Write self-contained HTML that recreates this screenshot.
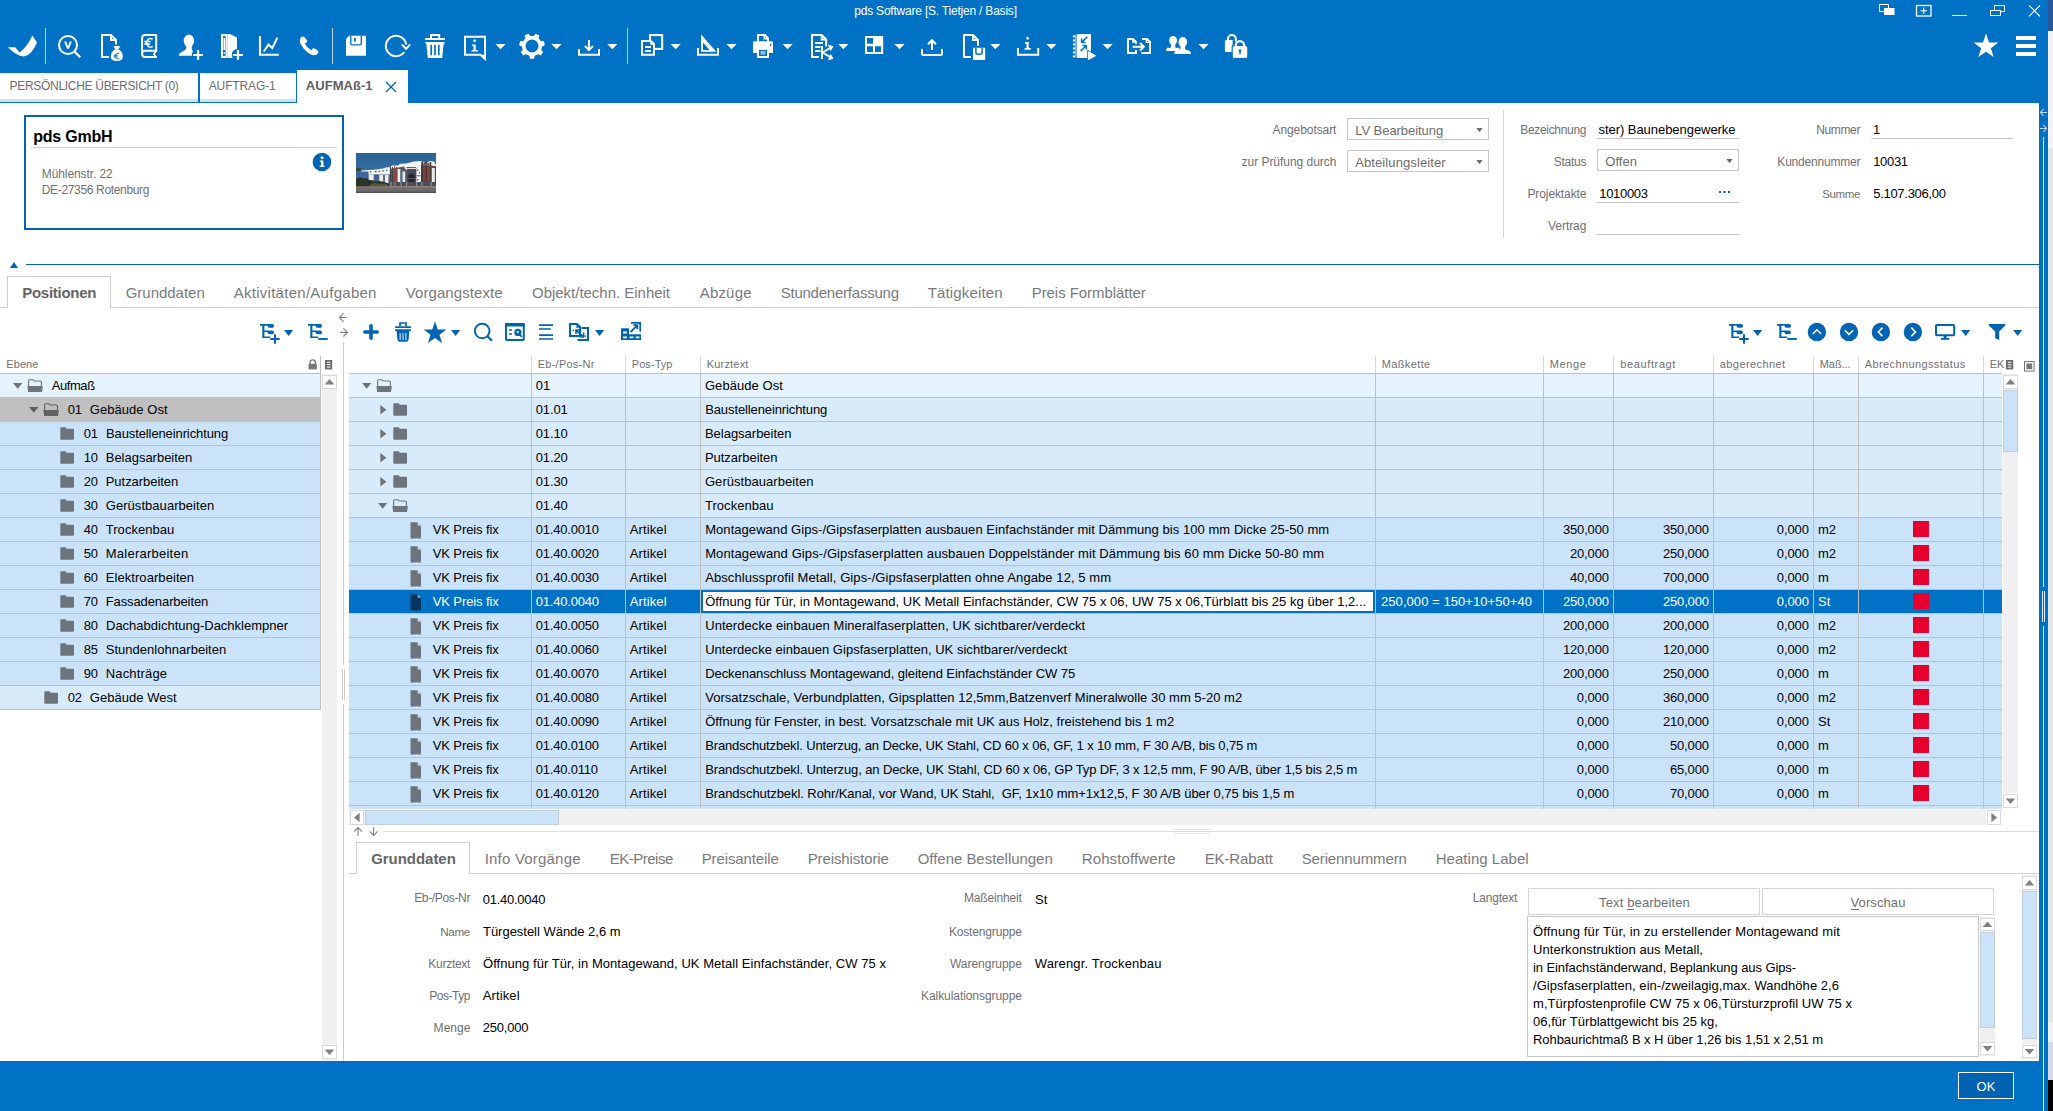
<!DOCTYPE html>
<html><head><meta charset="utf-8"><title>pds Software</title>
<style>
html,body{margin:0;padding:0}
body{width:2053px;height:1111px;position:relative;overflow:hidden;background:#fff;font-family:"Liberation Sans",sans-serif}
div,span.t,svg{position:absolute}
span.t{line-height:20px;white-space:pre}
</style></head><body>
<header aria-label="Titelleiste">
<div style="left:0px;top:0px;width:2048px;height:103px;background:#0072C6;"></div>
<div style="left:2039px;top:0px;width:9px;height:1111px;background:#0072C6;"></div>
<div style="left:0px;top:1061px;width:2048px;height:50px;background:#0072C6;"></div>
<div style="left:2048px;top:0px;width:5px;height:31px;background:#2B579A;"></div>
<div style="left:2048px;top:31px;width:5px;height:117px;background:#F3F3F3;"></div>
<div style="left:2048px;top:148px;width:5px;height:874px;background:#E6E6E6;"></div>
<div style="left:2048px;top:1022px;width:5px;height:20px;background:#F3F2F1;"></div>
<div style="left:2048px;top:1042px;width:5px;height:38px;background:#D4D9E7;"></div>
<div style="left:2048px;top:1080px;width:5px;height:31px;background:#000;"></div>
<div style="left:2043px;top:137px;width:1px;height:450px;background:#DCEBF8;"></div>
<div style="left:2042px;top:591px;width:1px;height:31px;background:#DCEBF8;"></div>
<div style="left:2044px;top:591px;width:1px;height:31px;background:#DCEBF8;"></div>
<div style="left:2043px;top:626px;width:1px;height:485px;background:#DCEBF8;"></div>
<span class="t" style="left:854.25px;top:1px;font-size:12px;color:#fff;letter-spacing:-0.209px;">pds Software [S. Tietjen / Basis]</span>
</header>
<nav aria-label="Dokumente">
<div style="left:0px;top:73px;width:198px;height:30px;background:#fff;"></div>
<div style="left:0px;top:99px;width:198px;height:3px;background:#CFE3F5;"></div>
<div style="left:0px;top:102px;width:198px;height:1px;background:#0072C6;"></div>
<div style="left:200px;top:73px;width:96px;height:30px;background:#fff;"></div>
<div style="left:200px;top:99px;width:96px;height:3px;background:#CFE3F5;"></div>
<div style="left:200px;top:102px;width:96px;height:1px;background:#0072C6;"></div>
<div style="left:297px;top:70px;width:111px;height:33px;background:#fff;"></div>
<span class="t" style="left:9.50px;top:76px;font-size:12px;color:#6E6E6E;letter-spacing:-0.299px;">PERSÖNLICHE ÜBERSICHT (0)</span>
<span class="t" style="left:208.76px;top:76px;font-size:12px;color:#6E6E6E;letter-spacing:-0.129px;">AUFTRAG-1</span>
<span class="t" style="left:305.74px;top:76px;font-size:13px;color:#5F5F5F;font-weight:700;letter-spacing:0.060px;">AUFMAß-1</span>
<svg style="left:385px;top:81px;" width="12" height="12" viewBox="0 0 12 12"><path d="M1 1L11 11M11 1L1 11" stroke="#0064B2" stroke-width="1.3" fill="none"/></svg>
</nav>
<section aria-label="Kopfdaten">
<div style="left:24px;top:115px;width:320px;height:115px;border:2px solid #0064B2;box-sizing:border-box;"></div>
<span class="t" style="left:33.18px;top:127px;font-size:16px;color:#000;font-weight:700;letter-spacing:-0.221px;">pds GmbH</span>
<div style="left:31px;top:147px;width:306px;height:1px;background:#D0D0D0;"></div>
<span class="t" style="left:41.76px;top:164px;font-size:12px;color:#707070;letter-spacing:-0.092px;">Mühlenstr. 22</span>
<span class="t" style="left:41.76px;top:180px;font-size:12px;color:#707070;letter-spacing:-0.337px;">DE-27356 Rotenburg</span>
<svg style="left:312px;top:152px;" width="20" height="20" viewBox="0 0 20 20"><circle cx="10" cy="10" r="9.3" fill="#0064B2"/><rect x="9" y="8.6" width="2.4" height="6" fill="#fff"/><rect x="7.8" y="8.6" width="2.4" height="1.3" fill="#fff"/><rect x="7.6" y="13.6" width="5" height="1.3" fill="#fff"/><circle cx="10.1" cy="5.8" r="1.5" fill="#fff"/></svg>
<svg style="left:356px;top:153px;" width="80" height="40" viewBox="0 0 80 40"><defs><linearGradient id="sky" x1="0" y1="0" x2="0" y2="1"><stop offset="0" stop-color="#2B6293"/><stop offset="1" stop-color="#3D7DB2"/></linearGradient></defs>
<rect width="80" height="40" fill="url(#sky)"/>
<path d="M5 17.5L12 17L20 16.4L27 15.6L30 14.4L34 14L36 12.6L42 12.4L44 10.8L50 10.4L54 9.6L58 8.4L64 8L68 9.2L70 11L72 9L74 8L78 8.4L80 12V34H5Z" fill="#F2F2F1"/>
<path d="M0 15.5Q2 14 4.5 15.5L5.5 18H0Z" fill="#3A4632"/>
<rect x="0" y="18.5" width="12.5" height="9" fill="#3A639C"/><path d="M2 19V27M4.5 19V27M7 19V27M9.5 19V27" stroke="#4F78AE" stroke-width="0.6"/>
<path d="M14 18.2h1.4v1.4H14zM18.6 18h2v1.3h-2zM22.6 17.8h1.6v1.3h-1.6zM26.4 17.3h1.6v1.3h-1.6zM30 16.7h1.4v1.3H30z" fill="#4E5A70"/>
<path d="M12.5 21.5H34V31H12.5Z" fill="#5D6C88"/><path d="M13 21.5h4.6V30H13zM23.4 22h3.6v8h-3.6zM29 22h3.4v9H29z" fill="#EDEDED"/><rect x="18.6" y="21.5" width="3.8" height="9" fill="#3C5F96"/>
<path d="M34 16L42 14.6L48 13.6L50 17H60V14.5H65V12L80 13V33H34Z" fill="#5A5560"/>
<path d="M34.4 13.6V32M36.4 14V32" stroke="#3F3F46" stroke-width="1"/><path d="M38.6 13V30M40.4 14V30" stroke="#8A4A40" stroke-width="1"/><path d="M37.2 15V23H38V15Z" fill="#3D72A8"/>
<rect x="41.6" y="16" width="2.8" height="16" fill="#F2F2F1"/><rect x="46.4" y="18.5" width="2.8" height="13.5" fill="#E6E6E6"/><rect x="44.6" y="17" width="1.6" height="14" fill="#3F6EA6"/>
<path d="M50.4 14.6H60" stroke="#9A3A32" stroke-width="1"/><rect x="51" y="16" width="9" height="16" fill="#444B5C"/><path d="M52.4 22.5Q55.5 18.5 58.8 22.5V31H52.4Z" fill="#25272E"/><path d="M51 25.5H60" stroke="#6B7180" stroke-width="0.6"/>
<rect x="60.4" y="13.5" width="4.6" height="18.5" fill="#F3F3F2"/><path d="M60.6 22.8H64.6" stroke="#8E3A32" stroke-width="0.9"/><path d="M61.2 16.6h1.2v1.5h-1.2zM63 19.2h1v1.3h-1zM61.2 26h1.2v1.5h-1.2z" fill="#50596A"/>
<rect x="65.4" y="9" width="1.6" height="23" fill="#3B3638"/><rect x="67.3" y="10" width="1.8" height="21" fill="#7D4338"/><rect x="69.5" y="8.6" width="1.4" height="23" fill="#3F3A3A"/><rect x="71.3" y="10" width="2" height="21" fill="#824637"/><rect x="73.8" y="9" width="1.5" height="22" fill="#46403F"/>
<rect x="75.8" y="15" width="3" height="17" fill="#ECECEC"/><rect x="79" y="13" width="1" height="19" fill="#7A4238"/>
<path d="M0 26Q3 23 7 25.5Q10 24 13 27Q17 26.5 20 28.5Q24 27.5 27 28.8L33 30.5V35H0Z" fill="#2B3228"/><path d="M14 31.4Q18 29 22 30.8Q27 29.6 32 31.8V35H14Z" fill="#4F5A3C"/>
<rect x="33" y="29" width="47" height="4.4" fill="#4C4E55"/><path d="M35 29V33M39 29V33M45 29V33M50.6 29V33M60.6 29V33M66 29V33M75 29V33" stroke="#8A8C93" stroke-width="1.3"/>
<rect x="0" y="33.2" width="80" height="2" fill="#8A7066"/><rect x="0" y="35" width="80" height="5" fill="#6B6C6E"/><rect x="0" y="38.6" width="80" height="1.4" fill="#505153"/></svg>
<span class="t" style="left:1272.50px;top:120px;font-size:12px;color:#707070;letter-spacing:-0.079px;">Angebotsart</span>
<span class="t" style="left:1241.55px;top:152px;font-size:12px;color:#707070;letter-spacing:-0.032px;">zur Prüfung durch</span>
<div style="left:1347px;top:118px;width:142px;height:22px;background:#fff;border:1px solid #C6C6C6;box-sizing:border-box;"></div>
<span class="t" style="left:1355.24px;top:121px;font-size:13px;color:#6E6E6E;letter-spacing:-0.053px;">LV Bearbeitung</span>
<svg style="left:1476px;top:128px;" width="7" height="4" viewBox="0 0 7 4"><path d="M0.4 0H6.6L3.5 4.2Z" fill="#6A6A6A"/></svg>
<div style="left:1347px;top:150px;width:142px;height:22px;background:#fff;border:1px solid #C6C6C6;box-sizing:border-box;"></div>
<span class="t" style="left:1355.24px;top:153px;font-size:13px;color:#6E6E6E;letter-spacing:0.096px;">Abteilungsleiter</span>
<svg style="left:1476px;top:160px;" width="7" height="4" viewBox="0 0 7 4"><path d="M0.4 0H6.6L3.5 4.2Z" fill="#6A6A6A"/></svg>
<div style="left:1503px;top:110px;width:1px;height:128px;background:#D4D4D4;"></div>
<span class="t" style="left:1520.26px;top:120px;font-size:12px;color:#707070;letter-spacing:-0.322px;">Bezeichnung</span>
<span class="t" style="left:1553.80px;top:152px;font-size:12px;color:#707070;letter-spacing:-0.280px;">Status</span>
<span class="t" style="left:1527.47px;top:184px;font-size:12px;color:#707070;letter-spacing:-0.108px;">Projektakte</span>
<span class="t" style="left:1548.03px;top:216px;font-size:12px;color:#707070;letter-spacing:-0.050px;">Vertrag</span>
<span class="t" style="left:1598.50px;top:120px;font-size:13px;color:#000;letter-spacing:-0.049px;">ster) Baunebengewerke</span>
<div style="left:1597px;top:138px;width:142px;height:1px;background:#C6C6C6;"></div>
<div style="left:1597px;top:149px;width:142px;height:22px;background:#fff;border:1px solid #C6C6C6;box-sizing:border-box;"></div>
<span class="t" style="left:1605.24px;top:152px;font-size:13px;color:#6E6E6E;letter-spacing:0.070px;">Offen</span>
<svg style="left:1726px;top:159px;" width="7" height="4" viewBox="0 0 7 4"><path d="M0.4 0H6.6L3.5 4.2Z" fill="#6A6A6A"/></svg>
<span class="t" style="left:1599.24px;top:184px;font-size:13px;color:#000;letter-spacing:-0.314px;">1010003</span>
<div style="left:1597px;top:202px;width:142px;height:1px;background:#C6C6C6;"></div>
<svg style="left:1719px;top:191px;" width="12" height="3" viewBox="0 0 12 3"><rect x="0" y="0" width="2" height="2" fill="#0064B2"/><rect x="4.5" y="0" width="2" height="2" fill="#0064B2"/><rect x="9" y="0" width="2" height="2" fill="#0064B2"/></svg>
<div style="left:1597px;top:234px;width:142px;height:1px;background:#C6C6C6;"></div>
<span class="t" style="left:1816.22px;top:120px;font-size:12px;color:#707070;letter-spacing:-0.360px;">Nummer</span>
<span class="t" style="left:1777.37px;top:152px;font-size:12px;color:#707070;letter-spacing:-0.211px;">Kundennummer</span>
<span class="t" style="left:1822.22px;top:184px;font-size:11.5px;color:#707070;letter-spacing:-0.356px;">Summe</span>
<span class="t" style="left:1873.00px;top:120px;font-size:13px;color:#000;">1</span>
<div style="left:1871px;top:138px;width:142px;height:1px;background:#C6C6C6;"></div>
<span class="t" style="left:1873.24px;top:152px;font-size:13px;color:#000;letter-spacing:-0.347px;">10031</span>
<span class="t" style="left:1873.24px;top:184px;font-size:13px;color:#000;letter-spacing:-0.291px;">5.107.306,00</span>
<svg style="left:2039px;top:106px;" width="9" height="28" viewBox="0 0 9 28"><path d="M8 6.5H1.5M4.5 3L1.5 6.5L4.5 10M1 22.5H7.5M4.5 19L7.5 22.5L4.5 26" stroke="#B9D9F2" stroke-width="1.1" fill="none"/></svg>
<svg style="left:9px;top:261px;" width="10" height="8" viewBox="0 0 10 8"><path d="M1 7H9L5 1Z" fill="#0064B2"/></svg>
<div style="left:26px;top:264px;width:2013px;height:1px;background:#0064B2;"></div>
</section>
<nav aria-label="Register">
<div style="left:0px;top:307px;width:2039px;height:1px;background:#CFCFCF;"></div>
<div style="left:7px;top:276px;width:104px;height:32px;background:#fff;border:1px solid #CFCFCF;box-sizing:border-box;border-bottom:none;"></div>
<span class="t" style="left:22.20px;top:283px;font-size:15px;color:#666;font-weight:700;letter-spacing:-0.261px;">Positionen</span>
<span class="t" style="left:125.70px;top:283px;font-size:15px;color:#7A7A7A;letter-spacing:-0.017px;">Grunddaten</span>
<span class="t" style="left:233.70px;top:283px;font-size:15px;color:#7A7A7A;letter-spacing:0.273px;">Aktivitäten/Aufgaben</span>
<span class="t" style="left:405.70px;top:283px;font-size:15px;color:#7A7A7A;letter-spacing:0.089px;">Vorgangstexte</span>
<span class="t" style="left:532.00px;top:283px;font-size:15px;color:#7A7A7A;letter-spacing:-0.019px;">Objekt/techn. Einheit</span>
<span class="t" style="left:699.70px;top:283px;font-size:15px;color:#7A7A7A;letter-spacing:0.196px;">Abzüge</span>
<span class="t" style="left:780.70px;top:283px;font-size:15px;color:#7A7A7A;letter-spacing:-0.231px;">Stundenerfassung</span>
<span class="t" style="left:927.70px;top:283px;font-size:15px;color:#7A7A7A;letter-spacing:0.153px;">Tätigkeiten</span>
<span class="t" style="left:1031.70px;top:283px;font-size:15px;color:#7A7A7A;letter-spacing:-0.057px;">Preis Formblätter</span>
</nav>
<aside aria-label="Ebenen">
<span class="t" style="left:6.28px;top:354px;font-size:11px;color:#707070;letter-spacing:0.093px;">Ebene</span>
<svg style="left:308px;top:359px;" width="10" height="11" viewBox="0 0 10 11"><path d="M2 5V3.4Q2 0.8 4.7 0.8Q7.4 0.8 7.4 3.4V5" fill="none" stroke="#777" stroke-width="1.3"/><rect x="0.6" y="4.8" width="8.2" height="5.6" fill="#777"/></svg>
<svg style="left:325px;top:360px;" width="8" height="10" viewBox="0 0 8 10"><rect x="0" y="0" width="7.2" height="9.4" fill="#6A6A6A"/><rect x="1.8" y="1.8" width="3.6" height="1" fill="#fff"/><rect x="1.8" y="4.2" width="3.6" height="1" fill="#fff"/><rect x="1.8" y="6.6" width="3.6" height="1" fill="#fff"/></svg>
<div style="left:320px;top:356px;width:1px;height:354px;background:#BFBFBF;"></div>
<div style="left:0px;top:373px;width:321px;height:1px;background:#BFBFBF;"></div>
<div style="left:0px;top:374px;width:320px;height:23px;background:#E5F3FD;"></div>
<svg style="left:13px;top:383px;" width="10" height="6" viewBox="0 0 10 6"><path d="M0 0H9.4L4.7 5.8Z" fill="#6E747A"/></svg>
<svg style="left:26.5px;top:379px;" width="17" height="14" viewBox="0 0 17 14"><path d="M1.6 7.2V1.9Q1.6 0.8 2.7 0.8H5.6Q6.3 0.8 6.6 1.3L7 2H13.3Q14.4 2 14.4 3.1V7.2" fill="none" stroke="#6C757D" stroke-width="1.1"/><path d="M0.4 6.9H15.8L15.2 12.2Q15.1 13.1 14.1 13.1H2Q1.1 13.1 1 12.2Z" fill="#6C757D"/></svg>
<span class="t" style="left:51.74px;top:376px;font-size:13px;color:#000;letter-spacing:-0.433px;">Aufmaß</span>
<div style="left:0px;top:397px;width:320px;height:25px;background:#C0C0C0;"></div>
<svg style="left:29px;top:407px;" width="10" height="6" viewBox="0 0 10 6"><path d="M0 0H9.4L4.7 5.8Z" fill="#5E5E5E"/></svg>
<svg style="left:42.5px;top:403px;" width="17" height="14" viewBox="0 0 17 14"><path d="M1.6 7.2V1.9Q1.6 0.8 2.7 0.8H5.6Q6.3 0.8 6.6 1.3L7 2H13.3Q14.4 2 14.4 3.1V7.2" fill="none" stroke="#616161" stroke-width="1.1"/><path d="M0.4 6.9H15.8L15.2 12.2Q15.1 13.1 14.1 13.1H2Q1.1 13.1 1 12.2Z" fill="#616161"/></svg>
<span class="t" style="left:67.74px;top:400px;font-size:13px;color:#000;letter-spacing:-0.274px;">01</span>
<span class="t" style="left:89.74px;top:400px;font-size:13px;color:#000;letter-spacing:0.053px;">Gebäude Ost</span>
<div style="left:0px;top:422px;width:320px;height:23px;background:#CAE3F8;"></div>
<div style="left:0px;top:445px;width:320px;height:1px;background:#BFBFBF;"></div>
<svg style="left:60px;top:427px;" width="15" height="13" viewBox="0 0 15 13"><path d="M0.3 1.4Q0.3 0.3 1.4 0.3H5.2Q6 0.3 6.3 1L6.7 1.7H12.8Q14 1.7 14 2.9V11.8Q14 12.7 13 12.7H1.3Q0.3 12.7 0.3 11.8Z" fill="#6C757D"/></svg>
<span class="t" style="left:83.74px;top:424px;font-size:13px;color:#000;letter-spacing:-0.274px;">01</span>
<span class="t" style="left:106.00px;top:424px;font-size:13px;color:#000;letter-spacing:-0.109px;">Baustelleneinrichtung</span>
<div style="left:0px;top:446px;width:320px;height:23px;background:#CAE3F8;"></div>
<div style="left:0px;top:469px;width:320px;height:1px;background:#BFBFBF;"></div>
<svg style="left:60px;top:451px;" width="15" height="13" viewBox="0 0 15 13"><path d="M0.3 1.4Q0.3 0.3 1.4 0.3H5.2Q6 0.3 6.3 1L6.7 1.7H12.8Q14 1.7 14 2.9V11.8Q14 12.7 13 12.7H1.3Q0.3 12.7 0.3 11.8Z" fill="#6C757D"/></svg>
<span class="t" style="left:83.74px;top:448px;font-size:13px;color:#000;letter-spacing:-0.274px;">10</span>
<span class="t" style="left:105.74px;top:448px;font-size:13px;color:#000;letter-spacing:-0.015px;">Belagsarbeiten</span>
<div style="left:0px;top:470px;width:320px;height:23px;background:#CAE3F8;"></div>
<div style="left:0px;top:493px;width:320px;height:1px;background:#BFBFBF;"></div>
<svg style="left:60px;top:475px;" width="15" height="13" viewBox="0 0 15 13"><path d="M0.3 1.4Q0.3 0.3 1.4 0.3H5.2Q6 0.3 6.3 1L6.7 1.7H12.8Q14 1.7 14 2.9V11.8Q14 12.7 13 12.7H1.3Q0.3 12.7 0.3 11.8Z" fill="#6C757D"/></svg>
<span class="t" style="left:83.74px;top:472px;font-size:13px;color:#000;letter-spacing:-0.274px;">20</span>
<span class="t" style="left:105.74px;top:472px;font-size:13px;color:#000;letter-spacing:-0.040px;">Putzarbeiten</span>
<div style="left:0px;top:494px;width:320px;height:23px;background:#CAE3F8;"></div>
<div style="left:0px;top:517px;width:320px;height:1px;background:#BFBFBF;"></div>
<svg style="left:60px;top:499px;" width="15" height="13" viewBox="0 0 15 13"><path d="M0.3 1.4Q0.3 0.3 1.4 0.3H5.2Q6 0.3 6.3 1L6.7 1.7H12.8Q14 1.7 14 2.9V11.8Q14 12.7 13 12.7H1.3Q0.3 12.7 0.3 11.8Z" fill="#6C757D"/></svg>
<span class="t" style="left:83.74px;top:496px;font-size:13px;color:#000;letter-spacing:-0.274px;">30</span>
<span class="t" style="left:105.74px;top:496px;font-size:13px;color:#000;letter-spacing:0.049px;">Gerüstbauarbeiten</span>
<div style="left:0px;top:518px;width:320px;height:23px;background:#CAE3F8;"></div>
<div style="left:0px;top:541px;width:320px;height:1px;background:#BFBFBF;"></div>
<svg style="left:60px;top:523px;" width="15" height="13" viewBox="0 0 15 13"><path d="M0.3 1.4Q0.3 0.3 1.4 0.3H5.2Q6 0.3 6.3 1L6.7 1.7H12.8Q14 1.7 14 2.9V11.8Q14 12.7 13 12.7H1.3Q0.3 12.7 0.3 11.8Z" fill="#6C757D"/></svg>
<span class="t" style="left:83.74px;top:520px;font-size:13px;color:#000;letter-spacing:-0.274px;">40</span>
<span class="t" style="left:105.74px;top:520px;font-size:13px;color:#000;letter-spacing:0.045px;">Trockenbau</span>
<div style="left:0px;top:542px;width:320px;height:23px;background:#CAE3F8;"></div>
<div style="left:0px;top:565px;width:320px;height:1px;background:#BFBFBF;"></div>
<svg style="left:60px;top:547px;" width="15" height="13" viewBox="0 0 15 13"><path d="M0.3 1.4Q0.3 0.3 1.4 0.3H5.2Q6 0.3 6.3 1L6.7 1.7H12.8Q14 1.7 14 2.9V11.8Q14 12.7 13 12.7H1.3Q0.3 12.7 0.3 11.8Z" fill="#6C757D"/></svg>
<span class="t" style="left:83.74px;top:544px;font-size:13px;color:#000;letter-spacing:-0.274px;">50</span>
<span class="t" style="left:105.74px;top:544px;font-size:13px;color:#000;letter-spacing:0.241px;">Malerarbeiten</span>
<div style="left:0px;top:566px;width:320px;height:23px;background:#CAE3F8;"></div>
<div style="left:0px;top:589px;width:320px;height:1px;background:#BFBFBF;"></div>
<svg style="left:60px;top:571px;" width="15" height="13" viewBox="0 0 15 13"><path d="M0.3 1.4Q0.3 0.3 1.4 0.3H5.2Q6 0.3 6.3 1L6.7 1.7H12.8Q14 1.7 14 2.9V11.8Q14 12.7 13 12.7H1.3Q0.3 12.7 0.3 11.8Z" fill="#6C757D"/></svg>
<span class="t" style="left:83.74px;top:568px;font-size:13px;color:#000;letter-spacing:-0.274px;">60</span>
<span class="t" style="left:105.74px;top:568px;font-size:13px;color:#000;letter-spacing:0.065px;">Elektroarbeiten</span>
<div style="left:0px;top:590px;width:320px;height:23px;background:#CAE3F8;"></div>
<div style="left:0px;top:613px;width:320px;height:1px;background:#BFBFBF;"></div>
<svg style="left:60px;top:595px;" width="15" height="13" viewBox="0 0 15 13"><path d="M0.3 1.4Q0.3 0.3 1.4 0.3H5.2Q6 0.3 6.3 1L6.7 1.7H12.8Q14 1.7 14 2.9V11.8Q14 12.7 13 12.7H1.3Q0.3 12.7 0.3 11.8Z" fill="#6C757D"/></svg>
<span class="t" style="left:83.74px;top:592px;font-size:13px;color:#000;letter-spacing:-0.274px;">70</span>
<span class="t" style="left:105.74px;top:592px;font-size:13px;color:#000;letter-spacing:-0.103px;">Fassadenarbeiten</span>
<div style="left:0px;top:614px;width:320px;height:23px;background:#CAE3F8;"></div>
<div style="left:0px;top:637px;width:320px;height:1px;background:#BFBFBF;"></div>
<svg style="left:60px;top:619px;" width="15" height="13" viewBox="0 0 15 13"><path d="M0.3 1.4Q0.3 0.3 1.4 0.3H5.2Q6 0.3 6.3 1L6.7 1.7H12.8Q14 1.7 14 2.9V11.8Q14 12.7 13 12.7H1.3Q0.3 12.7 0.3 11.8Z" fill="#6C757D"/></svg>
<span class="t" style="left:83.74px;top:616px;font-size:13px;color:#000;letter-spacing:-0.274px;">80</span>
<span class="t" style="left:106.00px;top:616px;font-size:13px;color:#000;letter-spacing:-0.003px;">Dachabdichtung-Dachklempner</span>
<div style="left:0px;top:638px;width:320px;height:23px;background:#CAE3F8;"></div>
<div style="left:0px;top:661px;width:320px;height:1px;background:#BFBFBF;"></div>
<svg style="left:60px;top:643px;" width="15" height="13" viewBox="0 0 15 13"><path d="M0.3 1.4Q0.3 0.3 1.4 0.3H5.2Q6 0.3 6.3 1L6.7 1.7H12.8Q14 1.7 14 2.9V11.8Q14 12.7 13 12.7H1.3Q0.3 12.7 0.3 11.8Z" fill="#6C757D"/></svg>
<span class="t" style="left:83.74px;top:640px;font-size:13px;color:#000;letter-spacing:-0.274px;">85</span>
<span class="t" style="left:105.74px;top:640px;font-size:13px;color:#000;letter-spacing:0.028px;">Stundenlohnarbeiten</span>
<div style="left:0px;top:662px;width:320px;height:23px;background:#CAE3F8;"></div>
<div style="left:0px;top:685px;width:320px;height:1px;background:#BFBFBF;"></div>
<svg style="left:60px;top:667px;" width="15" height="13" viewBox="0 0 15 13"><path d="M0.3 1.4Q0.3 0.3 1.4 0.3H5.2Q6 0.3 6.3 1L6.7 1.7H12.8Q14 1.7 14 2.9V11.8Q14 12.7 13 12.7H1.3Q0.3 12.7 0.3 11.8Z" fill="#6C757D"/></svg>
<span class="t" style="left:83.74px;top:664px;font-size:13px;color:#000;letter-spacing:-0.274px;">90</span>
<span class="t" style="left:105.74px;top:664px;font-size:13px;color:#000;letter-spacing:0.171px;">Nachträge</span>
<div style="left:0px;top:686px;width:320px;height:23px;background:#D8EBFB;"></div>
<div style="left:0px;top:709px;width:320px;height:1px;background:#BFBFBF;"></div>
<svg style="left:44px;top:691px;" width="15" height="13" viewBox="0 0 15 13"><path d="M0.3 1.4Q0.3 0.3 1.4 0.3H5.2Q6 0.3 6.3 1L6.7 1.7H12.8Q14 1.7 14 2.9V11.8Q14 12.7 13 12.7H1.3Q0.3 12.7 0.3 11.8Z" fill="#6C757D"/></svg>
<span class="t" style="left:67.74px;top:688px;font-size:13px;color:#000;letter-spacing:-0.274px;">02</span>
<span class="t" style="left:89.74px;top:688px;font-size:13px;color:#000;letter-spacing:0.036px;">Gebäude West</span>
<div style="left:322px;top:374px;width:15px;height:687px;background:#F0F0F0;"></div>
<div style="left:322px;top:375px;width:15px;height:14px;background:#fff;border:1px solid #D9D9D9;box-sizing:border-box;"></div>
<svg style="left:322px;top:375px;" width="15" height="14" viewBox="0 0 15 14"><path d="M2.7 9.6H12.3L7.5 4.0Z" fill="#808080"/></svg>
<div style="left:322px;top:1045px;width:15px;height:14px;background:#fff;border:1px solid #D9D9D9;box-sizing:border-box;"></div>
<svg style="left:322px;top:1045px;" width="15" height="14" viewBox="0 0 15 14"><path d="M2.7 4.4H12.3L7.5 10.0Z" fill="#808080"/></svg>
<div style="left:343px;top:342px;width:1px;height:323px;background:#CDCDCD;"></div>
<div style="left:342px;top:669px;width:1px;height:31px;background:#CDCDCD;"></div>
<div style="left:344px;top:669px;width:1px;height:31px;background:#CDCDCD;"></div>
<div style="left:343px;top:704px;width:1px;height:357px;background:#CDCDCD;"></div>
<svg style="left:338px;top:312px;" width="11" height="26" viewBox="0 0 11 26"><path d="M8.8 5.5H1.6M5.6 1.4L1.5 5.5L5.6 9.6M2.2 20.4H9.4M5.4 16.3L9.5 20.4L5.4 24.5" stroke="#808080" stroke-width="1.15" fill="none"/></svg>
</aside>
<main aria-label="Positionen">
<span class="t" style="left:537.78px;top:354px;font-size:11px;color:#707070;letter-spacing:0.237px;">Eb-/Pos-Nr</span>
<span class="t" style="left:631.78px;top:354px;font-size:11px;color:#707070;letter-spacing:0.061px;">Pos-Typ</span>
<span class="t" style="left:706.78px;top:354px;font-size:11px;color:#707070;letter-spacing:0.178px;">Kurztext</span>
<span class="t" style="left:1381.78px;top:354px;font-size:11px;color:#707070;letter-spacing:0.366px;">Maßkette</span>
<span class="t" style="left:1549.78px;top:354px;font-size:11px;color:#707070;letter-spacing:0.628px;">Menge</span>
<span class="t" style="left:1620.28px;top:354px;font-size:11px;color:#707070;letter-spacing:0.624px;">beauftragt</span>
<span class="t" style="left:1719.78px;top:354px;font-size:11px;color:#707070;letter-spacing:0.420px;">abgerechnet</span>
<span class="t" style="left:1819.78px;top:354px;font-size:11px;color:#707070;letter-spacing:-0.066px;">Maß...</span>
<span class="t" style="left:1864.78px;top:354px;font-size:11px;color:#707070;letter-spacing:0.389px;">Abrechnungsstatus</span>
<span class="t" style="left:1989.78px;top:354px;font-size:11px;color:#707070;letter-spacing:-0.152px;">EK</span>
<div style="left:531px;top:356px;width:1px;height:18px;background:#D6D6D6;"></div>
<div style="left:625px;top:356px;width:1px;height:18px;background:#D6D6D6;"></div>
<div style="left:700px;top:356px;width:1px;height:18px;background:#D6D6D6;"></div>
<div style="left:1375px;top:356px;width:1px;height:18px;background:#D6D6D6;"></div>
<div style="left:1543px;top:356px;width:1px;height:18px;background:#D6D6D6;"></div>
<div style="left:1613px;top:356px;width:1px;height:18px;background:#D6D6D6;"></div>
<div style="left:1713px;top:356px;width:1px;height:18px;background:#D6D6D6;"></div>
<div style="left:1813px;top:356px;width:1px;height:18px;background:#D6D6D6;"></div>
<div style="left:1858px;top:356px;width:1px;height:18px;background:#D6D6D6;"></div>
<div style="left:1983px;top:356px;width:1px;height:18px;background:#D6D6D6;"></div>
<svg style="left:2006px;top:360px;" width="8" height="10" viewBox="0 0 8 10"><rect x="0" y="0" width="7.2" height="9.4" fill="#6A6A6A"/><rect x="1.8" y="1.8" width="3.6" height="1" fill="#fff"/><rect x="1.8" y="4.2" width="3.6" height="1" fill="#fff"/><rect x="1.8" y="6.6" width="3.6" height="1" fill="#fff"/></svg>
<svg style="left:2024px;top:361px;" width="11" height="11" viewBox="0 0 11 11"><rect x="0.5" y="0.5" width="9.6" height="9.6" fill="#fff" stroke="#777" stroke-width="1"/><rect x="2.4" y="2.4" width="5.8" height="5.8" fill="#777"/></svg>
<div style="left:349px;top:373px;width:1653px;height:1px;background:#BFBFBF;"></div>
<div style="left:349px;top:374px;width:1653px;height:23px;background:#E5F3FD;"></div>
<div style="left:349px;top:397px;width:1653px;height:1px;background:#BFBFBF;"></div>
<div style="left:531px;top:374px;width:1px;height:23px;background:#BFBFBF;"></div>
<div style="left:625px;top:374px;width:1px;height:23px;background:#BFBFBF;"></div>
<div style="left:700px;top:374px;width:1px;height:23px;background:#BFBFBF;"></div>
<div style="left:1375px;top:374px;width:1px;height:23px;background:#BFBFBF;"></div>
<div style="left:1543px;top:374px;width:1px;height:23px;background:#BFBFBF;"></div>
<div style="left:1613px;top:374px;width:1px;height:23px;background:#BFBFBF;"></div>
<div style="left:1713px;top:374px;width:1px;height:23px;background:#BFBFBF;"></div>
<div style="left:1813px;top:374px;width:1px;height:23px;background:#BFBFBF;"></div>
<div style="left:1858px;top:374px;width:1px;height:23px;background:#BFBFBF;"></div>
<div style="left:1983px;top:374px;width:1px;height:23px;background:#BFBFBF;"></div>
<svg style="left:362px;top:383px;" width="10" height="6" viewBox="0 0 10 6"><path d="M0 0H9.4L4.7 5.8Z" fill="#6E747A"/></svg>
<svg style="left:375.5px;top:379px;" width="17" height="14" viewBox="0 0 17 14"><path d="M1.6 7.2V1.9Q1.6 0.8 2.7 0.8H5.6Q6.3 0.8 6.6 1.3L7 2H13.3Q14.4 2 14.4 3.1V7.2" fill="none" stroke="#6C757D" stroke-width="1.1"/><path d="M0.4 6.9H15.8L15.2 12.2Q15.1 13.1 14.1 13.1H2Q1.1 13.1 1 12.2Z" fill="#6C757D"/></svg>
<span class="t" style="left:535.74px;top:376px;font-size:13px;color:#000;letter-spacing:0.126px;">01</span>
<span class="t" style="left:704.94px;top:376px;font-size:13px;color:#000;letter-spacing:0.053px;">Gebäude Ost</span>
<div style="left:349px;top:398px;width:1653px;height:23px;background:#D8EBFB;"></div>
<div style="left:349px;top:421px;width:1653px;height:1px;background:#BFBFBF;"></div>
<div style="left:531px;top:398px;width:1px;height:23px;background:#BFBFBF;"></div>
<div style="left:625px;top:398px;width:1px;height:23px;background:#BFBFBF;"></div>
<div style="left:700px;top:398px;width:1px;height:23px;background:#BFBFBF;"></div>
<div style="left:1375px;top:398px;width:1px;height:23px;background:#BFBFBF;"></div>
<div style="left:1543px;top:398px;width:1px;height:23px;background:#BFBFBF;"></div>
<div style="left:1613px;top:398px;width:1px;height:23px;background:#BFBFBF;"></div>
<div style="left:1713px;top:398px;width:1px;height:23px;background:#BFBFBF;"></div>
<div style="left:1813px;top:398px;width:1px;height:23px;background:#BFBFBF;"></div>
<div style="left:1858px;top:398px;width:1px;height:23px;background:#BFBFBF;"></div>
<div style="left:1983px;top:398px;width:1px;height:23px;background:#BFBFBF;"></div>
<svg style="left:380px;top:405px;" width="7" height="10" viewBox="0 0 7 10"><path d="M0.3 0L6.4 4.7L0.3 9.4Z" fill="#6E747A"/></svg>
<svg style="left:393px;top:403px;" width="15" height="13" viewBox="0 0 15 13"><path d="M0.3 1.4Q0.3 0.3 1.4 0.3H5.2Q6 0.3 6.3 1L6.7 1.7H12.8Q14 1.7 14 2.9V11.8Q14 12.7 13 12.7H1.3Q0.3 12.7 0.3 11.8Z" fill="#6C757D"/></svg>
<span class="t" style="left:535.74px;top:400px;font-size:13px;color:#000;letter-spacing:-0.104px;">01.01</span>
<span class="t" style="left:705.20px;top:400px;font-size:13px;color:#000;letter-spacing:-0.109px;">Baustelleneinrichtung</span>
<div style="left:349px;top:422px;width:1653px;height:23px;background:#D8EBFB;"></div>
<div style="left:349px;top:445px;width:1653px;height:1px;background:#BFBFBF;"></div>
<div style="left:531px;top:422px;width:1px;height:23px;background:#BFBFBF;"></div>
<div style="left:625px;top:422px;width:1px;height:23px;background:#BFBFBF;"></div>
<div style="left:700px;top:422px;width:1px;height:23px;background:#BFBFBF;"></div>
<div style="left:1375px;top:422px;width:1px;height:23px;background:#BFBFBF;"></div>
<div style="left:1543px;top:422px;width:1px;height:23px;background:#BFBFBF;"></div>
<div style="left:1613px;top:422px;width:1px;height:23px;background:#BFBFBF;"></div>
<div style="left:1713px;top:422px;width:1px;height:23px;background:#BFBFBF;"></div>
<div style="left:1813px;top:422px;width:1px;height:23px;background:#BFBFBF;"></div>
<div style="left:1858px;top:422px;width:1px;height:23px;background:#BFBFBF;"></div>
<div style="left:1983px;top:422px;width:1px;height:23px;background:#BFBFBF;"></div>
<svg style="left:380px;top:429px;" width="7" height="10" viewBox="0 0 7 10"><path d="M0.3 0L6.4 4.7L0.3 9.4Z" fill="#6E747A"/></svg>
<svg style="left:393px;top:427px;" width="15" height="13" viewBox="0 0 15 13"><path d="M0.3 1.4Q0.3 0.3 1.4 0.3H5.2Q6 0.3 6.3 1L6.7 1.7H12.8Q14 1.7 14 2.9V11.8Q14 12.7 13 12.7H1.3Q0.3 12.7 0.3 11.8Z" fill="#6C757D"/></svg>
<span class="t" style="left:535.74px;top:424px;font-size:13px;color:#000;letter-spacing:-0.104px;">01.10</span>
<span class="t" style="left:704.94px;top:424px;font-size:13px;color:#000;letter-spacing:-0.015px;">Belagsarbeiten</span>
<div style="left:349px;top:446px;width:1653px;height:23px;background:#D8EBFB;"></div>
<div style="left:349px;top:469px;width:1653px;height:1px;background:#BFBFBF;"></div>
<div style="left:531px;top:446px;width:1px;height:23px;background:#BFBFBF;"></div>
<div style="left:625px;top:446px;width:1px;height:23px;background:#BFBFBF;"></div>
<div style="left:700px;top:446px;width:1px;height:23px;background:#BFBFBF;"></div>
<div style="left:1375px;top:446px;width:1px;height:23px;background:#BFBFBF;"></div>
<div style="left:1543px;top:446px;width:1px;height:23px;background:#BFBFBF;"></div>
<div style="left:1613px;top:446px;width:1px;height:23px;background:#BFBFBF;"></div>
<div style="left:1713px;top:446px;width:1px;height:23px;background:#BFBFBF;"></div>
<div style="left:1813px;top:446px;width:1px;height:23px;background:#BFBFBF;"></div>
<div style="left:1858px;top:446px;width:1px;height:23px;background:#BFBFBF;"></div>
<div style="left:1983px;top:446px;width:1px;height:23px;background:#BFBFBF;"></div>
<svg style="left:380px;top:453px;" width="7" height="10" viewBox="0 0 7 10"><path d="M0.3 0L6.4 4.7L0.3 9.4Z" fill="#6E747A"/></svg>
<svg style="left:393px;top:451px;" width="15" height="13" viewBox="0 0 15 13"><path d="M0.3 1.4Q0.3 0.3 1.4 0.3H5.2Q6 0.3 6.3 1L6.7 1.7H12.8Q14 1.7 14 2.9V11.8Q14 12.7 13 12.7H1.3Q0.3 12.7 0.3 11.8Z" fill="#6C757D"/></svg>
<span class="t" style="left:535.74px;top:448px;font-size:13px;color:#000;letter-spacing:-0.104px;">01.20</span>
<span class="t" style="left:704.94px;top:448px;font-size:13px;color:#000;letter-spacing:-0.040px;">Putzarbeiten</span>
<div style="left:349px;top:470px;width:1653px;height:23px;background:#D8EBFB;"></div>
<div style="left:349px;top:493px;width:1653px;height:1px;background:#BFBFBF;"></div>
<div style="left:531px;top:470px;width:1px;height:23px;background:#BFBFBF;"></div>
<div style="left:625px;top:470px;width:1px;height:23px;background:#BFBFBF;"></div>
<div style="left:700px;top:470px;width:1px;height:23px;background:#BFBFBF;"></div>
<div style="left:1375px;top:470px;width:1px;height:23px;background:#BFBFBF;"></div>
<div style="left:1543px;top:470px;width:1px;height:23px;background:#BFBFBF;"></div>
<div style="left:1613px;top:470px;width:1px;height:23px;background:#BFBFBF;"></div>
<div style="left:1713px;top:470px;width:1px;height:23px;background:#BFBFBF;"></div>
<div style="left:1813px;top:470px;width:1px;height:23px;background:#BFBFBF;"></div>
<div style="left:1858px;top:470px;width:1px;height:23px;background:#BFBFBF;"></div>
<div style="left:1983px;top:470px;width:1px;height:23px;background:#BFBFBF;"></div>
<svg style="left:380px;top:477px;" width="7" height="10" viewBox="0 0 7 10"><path d="M0.3 0L6.4 4.7L0.3 9.4Z" fill="#6E747A"/></svg>
<svg style="left:393px;top:475px;" width="15" height="13" viewBox="0 0 15 13"><path d="M0.3 1.4Q0.3 0.3 1.4 0.3H5.2Q6 0.3 6.3 1L6.7 1.7H12.8Q14 1.7 14 2.9V11.8Q14 12.7 13 12.7H1.3Q0.3 12.7 0.3 11.8Z" fill="#6C757D"/></svg>
<span class="t" style="left:535.74px;top:472px;font-size:13px;color:#000;letter-spacing:-0.104px;">01.30</span>
<span class="t" style="left:704.94px;top:472px;font-size:13px;color:#000;letter-spacing:0.049px;">Gerüstbauarbeiten</span>
<div style="left:349px;top:494px;width:1653px;height:23px;background:#D8EBFB;"></div>
<div style="left:349px;top:517px;width:1653px;height:1px;background:#BFBFBF;"></div>
<div style="left:531px;top:494px;width:1px;height:23px;background:#BFBFBF;"></div>
<div style="left:625px;top:494px;width:1px;height:23px;background:#BFBFBF;"></div>
<div style="left:700px;top:494px;width:1px;height:23px;background:#BFBFBF;"></div>
<div style="left:1375px;top:494px;width:1px;height:23px;background:#BFBFBF;"></div>
<div style="left:1543px;top:494px;width:1px;height:23px;background:#BFBFBF;"></div>
<div style="left:1613px;top:494px;width:1px;height:23px;background:#BFBFBF;"></div>
<div style="left:1713px;top:494px;width:1px;height:23px;background:#BFBFBF;"></div>
<div style="left:1813px;top:494px;width:1px;height:23px;background:#BFBFBF;"></div>
<div style="left:1858px;top:494px;width:1px;height:23px;background:#BFBFBF;"></div>
<div style="left:1983px;top:494px;width:1px;height:23px;background:#BFBFBF;"></div>
<svg style="left:378px;top:503px;" width="10" height="6" viewBox="0 0 10 6"><path d="M0 0H9.4L4.7 5.8Z" fill="#6E747A"/></svg>
<svg style="left:391.5px;top:499px;" width="17" height="14" viewBox="0 0 17 14"><path d="M1.6 7.2V1.9Q1.6 0.8 2.7 0.8H5.6Q6.3 0.8 6.6 1.3L7 2H13.3Q14.4 2 14.4 3.1V7.2" fill="none" stroke="#6C757D" stroke-width="1.1"/><path d="M0.4 6.9H15.8L15.2 12.2Q15.1 13.1 14.1 13.1H2Q1.1 13.1 1 12.2Z" fill="#6C757D"/></svg>
<span class="t" style="left:535.74px;top:496px;font-size:13px;color:#000;letter-spacing:-0.104px;">01.40</span>
<span class="t" style="left:704.94px;top:496px;font-size:13px;color:#000;letter-spacing:0.045px;">Trockenbau</span>
<div style="left:349px;top:518px;width:1653px;height:23px;background:#CAE3F8;"></div>
<div style="left:349px;top:541px;width:1653px;height:1px;background:#BFBFBF;"></div>
<div style="left:531px;top:518px;width:1px;height:23px;background:#BFBFBF;"></div>
<div style="left:625px;top:518px;width:1px;height:23px;background:#BFBFBF;"></div>
<div style="left:700px;top:518px;width:1px;height:23px;background:#BFBFBF;"></div>
<div style="left:1375px;top:518px;width:1px;height:23px;background:#BFBFBF;"></div>
<div style="left:1543px;top:518px;width:1px;height:23px;background:#BFBFBF;"></div>
<div style="left:1613px;top:518px;width:1px;height:23px;background:#BFBFBF;"></div>
<div style="left:1713px;top:518px;width:1px;height:23px;background:#BFBFBF;"></div>
<div style="left:1813px;top:518px;width:1px;height:23px;background:#BFBFBF;"></div>
<div style="left:1858px;top:518px;width:1px;height:23px;background:#BFBFBF;"></div>
<div style="left:1983px;top:518px;width:1px;height:23px;background:#BFBFBF;"></div>
<svg style="left:410px;top:522px;" width="12" height="17" viewBox="0 0 12 17"><path d="M0.5 0.3H7.3L11 4V16.4H0.5Z" fill="#6C757D"/><path d="M7.6 0.3V3.7H11Z" fill="#fff" opacity="0.55"/></svg>
<span class="t" style="left:432.74px;top:520px;font-size:13px;color:#000;letter-spacing:-0.106px;">VK Preis fix</span>
<span class="t" style="left:629.74px;top:520px;font-size:13px;color:#000;letter-spacing:0.113px;">Artikel</span>
<span class="t" style="left:535.74px;top:520px;font-size:13px;color:#000;letter-spacing:-0.205px;">01.40.0010</span>
<span class="t" style="left:705.20px;top:520px;font-size:13px;color:#000;letter-spacing:0.050px;">Montagewand Gips-/Gipsfaserplatten ausbauen Einfachständer mit Dämmung bis 100 mm Dicke 25-50 mm</span>
<span class="t" style="left:1562.98px;top:520px;font-size:13px;color:#000;letter-spacing:-0.168px;">350,000</span>
<span class="t" style="left:1662.98px;top:520px;font-size:13px;color:#000;letter-spacing:-0.168px;">350,000</span>
<span class="t" style="left:1776.84px;top:520px;font-size:13px;color:#000;letter-spacing:-0.104px;">0,000</span>
<span class="t" style="left:1818.00px;top:520px;font-size:13px;color:#000;">m2</span>
<div style="left:1913px;top:521px;width:16px;height:16px;background:#E6002D;"></div>
<div style="left:349px;top:542px;width:1653px;height:23px;background:#CAE3F8;"></div>
<div style="left:349px;top:565px;width:1653px;height:1px;background:#BFBFBF;"></div>
<div style="left:531px;top:542px;width:1px;height:23px;background:#BFBFBF;"></div>
<div style="left:625px;top:542px;width:1px;height:23px;background:#BFBFBF;"></div>
<div style="left:700px;top:542px;width:1px;height:23px;background:#BFBFBF;"></div>
<div style="left:1375px;top:542px;width:1px;height:23px;background:#BFBFBF;"></div>
<div style="left:1543px;top:542px;width:1px;height:23px;background:#BFBFBF;"></div>
<div style="left:1613px;top:542px;width:1px;height:23px;background:#BFBFBF;"></div>
<div style="left:1713px;top:542px;width:1px;height:23px;background:#BFBFBF;"></div>
<div style="left:1813px;top:542px;width:1px;height:23px;background:#BFBFBF;"></div>
<div style="left:1858px;top:542px;width:1px;height:23px;background:#BFBFBF;"></div>
<div style="left:1983px;top:542px;width:1px;height:23px;background:#BFBFBF;"></div>
<svg style="left:410px;top:546px;" width="12" height="17" viewBox="0 0 12 17"><path d="M0.5 0.3H7.3L11 4V16.4H0.5Z" fill="#6C757D"/><path d="M7.6 0.3V3.7H11Z" fill="#fff" opacity="0.55"/></svg>
<span class="t" style="left:432.74px;top:544px;font-size:13px;color:#000;letter-spacing:-0.106px;">VK Preis fix</span>
<span class="t" style="left:629.74px;top:544px;font-size:13px;color:#000;letter-spacing:0.113px;">Artikel</span>
<span class="t" style="left:535.74px;top:544px;font-size:13px;color:#000;letter-spacing:-0.205px;">01.40.0020</span>
<span class="t" style="left:705.20px;top:544px;font-size:13px;color:#000;letter-spacing:0.098px;">Montagewand Gips-/Gipsfaserplatten ausbauen Doppelständer mit Dämmung bis 60 mm Dicke 50-80 mm</span>
<span class="t" style="left:1569.90px;top:544px;font-size:13px;color:#000;letter-spacing:-0.141px;">20,000</span>
<span class="t" style="left:1662.98px;top:544px;font-size:13px;color:#000;letter-spacing:-0.168px;">250,000</span>
<span class="t" style="left:1776.84px;top:544px;font-size:13px;color:#000;letter-spacing:-0.104px;">0,000</span>
<span class="t" style="left:1818.00px;top:544px;font-size:13px;color:#000;">m2</span>
<div style="left:1913px;top:545px;width:16px;height:16px;background:#E6002D;"></div>
<div style="left:349px;top:566px;width:1653px;height:23px;background:#CAE3F8;"></div>
<div style="left:349px;top:589px;width:1653px;height:1px;background:#BFBFBF;"></div>
<div style="left:531px;top:566px;width:1px;height:23px;background:#BFBFBF;"></div>
<div style="left:625px;top:566px;width:1px;height:23px;background:#BFBFBF;"></div>
<div style="left:700px;top:566px;width:1px;height:23px;background:#BFBFBF;"></div>
<div style="left:1375px;top:566px;width:1px;height:23px;background:#BFBFBF;"></div>
<div style="left:1543px;top:566px;width:1px;height:23px;background:#BFBFBF;"></div>
<div style="left:1613px;top:566px;width:1px;height:23px;background:#BFBFBF;"></div>
<div style="left:1713px;top:566px;width:1px;height:23px;background:#BFBFBF;"></div>
<div style="left:1813px;top:566px;width:1px;height:23px;background:#BFBFBF;"></div>
<div style="left:1858px;top:566px;width:1px;height:23px;background:#BFBFBF;"></div>
<div style="left:1983px;top:566px;width:1px;height:23px;background:#BFBFBF;"></div>
<svg style="left:410px;top:570px;" width="12" height="17" viewBox="0 0 12 17"><path d="M0.5 0.3H7.3L11 4V16.4H0.5Z" fill="#6C757D"/><path d="M7.6 0.3V3.7H11Z" fill="#fff" opacity="0.55"/></svg>
<span class="t" style="left:432.74px;top:568px;font-size:13px;color:#000;letter-spacing:-0.106px;">VK Preis fix</span>
<span class="t" style="left:629.74px;top:568px;font-size:13px;color:#000;letter-spacing:0.113px;">Artikel</span>
<span class="t" style="left:535.74px;top:568px;font-size:13px;color:#000;letter-spacing:-0.205px;">01.40.0030</span>
<span class="t" style="left:705.20px;top:568px;font-size:13px;color:#000;letter-spacing:0.085px;">Abschlussprofil Metall, Gips-/Gipsfaserplatten ohne Angabe 12, 5 mm</span>
<span class="t" style="left:1569.90px;top:568px;font-size:13px;color:#000;letter-spacing:-0.141px;">40,000</span>
<span class="t" style="left:1662.98px;top:568px;font-size:13px;color:#000;letter-spacing:-0.168px;">700,000</span>
<span class="t" style="left:1776.84px;top:568px;font-size:13px;color:#000;letter-spacing:-0.104px;">0,000</span>
<span class="t" style="left:1818.00px;top:568px;font-size:13px;color:#000;">m</span>
<div style="left:1913px;top:569px;width:16px;height:16px;background:#E6002D;"></div>
<div style="left:349px;top:590px;width:1653px;height:23px;background:#0072C6;"></div>
<div style="left:349px;top:613px;width:1653px;height:1px;background:#BFBFBF;"></div>
<div style="left:531px;top:590px;width:1px;height:23px;background:#BFBFBF;"></div>
<div style="left:625px;top:590px;width:1px;height:23px;background:#BFBFBF;"></div>
<div style="left:700px;top:590px;width:1px;height:23px;background:#BFBFBF;"></div>
<div style="left:1375px;top:590px;width:1px;height:23px;background:#BFBFBF;"></div>
<div style="left:1543px;top:590px;width:1px;height:23px;background:#BFBFBF;"></div>
<div style="left:1613px;top:590px;width:1px;height:23px;background:#BFBFBF;"></div>
<div style="left:1713px;top:590px;width:1px;height:23px;background:#BFBFBF;"></div>
<div style="left:1813px;top:590px;width:1px;height:23px;background:#BFBFBF;"></div>
<div style="left:1858px;top:590px;width:1px;height:23px;background:#BFBFBF;"></div>
<div style="left:1983px;top:590px;width:1px;height:23px;background:#BFBFBF;"></div>
<svg style="left:410px;top:594px;" width="12" height="17" viewBox="0 0 12 17"><path d="M0.5 0.3H7.3L11 4V16.4H0.5Z" fill="#06365F"/><path d="M7.6 0.3V3.7H11Z" fill="#fff" opacity="0.55"/></svg>
<span class="t" style="left:432.74px;top:592px;font-size:13px;color:#fff;letter-spacing:-0.106px;">VK Preis fix</span>
<span class="t" style="left:629.74px;top:592px;font-size:13px;color:#fff;letter-spacing:0.113px;">Artikel</span>
<span class="t" style="left:535.74px;top:592px;font-size:13px;color:#fff;letter-spacing:-0.205px;">01.40.0040</span>
<div style="left:703px;top:592px;width:670px;height:19px;background:#fff;"></div>
<span class="t" style="left:705.20px;top:592px;font-size:13px;color:#000;letter-spacing:0.022px;">Öffnung für Tür, in Montagewand, UK Metall Einfachständer, CW 75 x 06, UW 75 x 06,Türblatt bis 25 kg über 1,2...</span>
<span class="t" style="left:1381.00px;top:592px;font-size:13px;color:#fff;letter-spacing:0.062px;">250,000 = 150+10+50+40</span>
<span class="t" style="left:1562.98px;top:592px;font-size:13px;color:#fff;letter-spacing:-0.168px;">250,000</span>
<span class="t" style="left:1662.98px;top:592px;font-size:13px;color:#fff;letter-spacing:-0.168px;">250,000</span>
<span class="t" style="left:1776.84px;top:592px;font-size:13px;color:#fff;letter-spacing:-0.104px;">0,000</span>
<span class="t" style="left:1818.00px;top:592px;font-size:13px;color:#fff;">St</span>
<div style="left:1913px;top:593px;width:16px;height:16px;background:#E6002D;"></div>
<div style="left:349px;top:614px;width:1653px;height:23px;background:#CAE3F8;"></div>
<div style="left:349px;top:637px;width:1653px;height:1px;background:#BFBFBF;"></div>
<div style="left:531px;top:614px;width:1px;height:23px;background:#BFBFBF;"></div>
<div style="left:625px;top:614px;width:1px;height:23px;background:#BFBFBF;"></div>
<div style="left:700px;top:614px;width:1px;height:23px;background:#BFBFBF;"></div>
<div style="left:1375px;top:614px;width:1px;height:23px;background:#BFBFBF;"></div>
<div style="left:1543px;top:614px;width:1px;height:23px;background:#BFBFBF;"></div>
<div style="left:1613px;top:614px;width:1px;height:23px;background:#BFBFBF;"></div>
<div style="left:1713px;top:614px;width:1px;height:23px;background:#BFBFBF;"></div>
<div style="left:1813px;top:614px;width:1px;height:23px;background:#BFBFBF;"></div>
<div style="left:1858px;top:614px;width:1px;height:23px;background:#BFBFBF;"></div>
<div style="left:1983px;top:614px;width:1px;height:23px;background:#BFBFBF;"></div>
<svg style="left:410px;top:618px;" width="12" height="17" viewBox="0 0 12 17"><path d="M0.5 0.3H7.3L11 4V16.4H0.5Z" fill="#6C757D"/><path d="M7.6 0.3V3.7H11Z" fill="#fff" opacity="0.55"/></svg>
<span class="t" style="left:432.74px;top:616px;font-size:13px;color:#000;letter-spacing:-0.106px;">VK Preis fix</span>
<span class="t" style="left:629.74px;top:616px;font-size:13px;color:#000;letter-spacing:0.113px;">Artikel</span>
<span class="t" style="left:535.74px;top:616px;font-size:13px;color:#000;letter-spacing:-0.205px;">01.40.0050</span>
<span class="t" style="left:705.20px;top:616px;font-size:13px;color:#000;letter-spacing:0.056px;">Unterdecke einbauen Mineralfaserplatten, UK sichtbarer/verdeckt</span>
<span class="t" style="left:1562.98px;top:616px;font-size:13px;color:#000;letter-spacing:-0.168px;">200,000</span>
<span class="t" style="left:1662.98px;top:616px;font-size:13px;color:#000;letter-spacing:-0.168px;">200,000</span>
<span class="t" style="left:1776.84px;top:616px;font-size:13px;color:#000;letter-spacing:-0.104px;">0,000</span>
<span class="t" style="left:1818.00px;top:616px;font-size:13px;color:#000;">m2</span>
<div style="left:1913px;top:617px;width:16px;height:16px;background:#E6002D;"></div>
<div style="left:349px;top:638px;width:1653px;height:23px;background:#CAE3F8;"></div>
<div style="left:349px;top:661px;width:1653px;height:1px;background:#BFBFBF;"></div>
<div style="left:531px;top:638px;width:1px;height:23px;background:#BFBFBF;"></div>
<div style="left:625px;top:638px;width:1px;height:23px;background:#BFBFBF;"></div>
<div style="left:700px;top:638px;width:1px;height:23px;background:#BFBFBF;"></div>
<div style="left:1375px;top:638px;width:1px;height:23px;background:#BFBFBF;"></div>
<div style="left:1543px;top:638px;width:1px;height:23px;background:#BFBFBF;"></div>
<div style="left:1613px;top:638px;width:1px;height:23px;background:#BFBFBF;"></div>
<div style="left:1713px;top:638px;width:1px;height:23px;background:#BFBFBF;"></div>
<div style="left:1813px;top:638px;width:1px;height:23px;background:#BFBFBF;"></div>
<div style="left:1858px;top:638px;width:1px;height:23px;background:#BFBFBF;"></div>
<div style="left:1983px;top:638px;width:1px;height:23px;background:#BFBFBF;"></div>
<svg style="left:410px;top:642px;" width="12" height="17" viewBox="0 0 12 17"><path d="M0.5 0.3H7.3L11 4V16.4H0.5Z" fill="#6C757D"/><path d="M7.6 0.3V3.7H11Z" fill="#fff" opacity="0.55"/></svg>
<span class="t" style="left:432.74px;top:640px;font-size:13px;color:#000;letter-spacing:-0.106px;">VK Preis fix</span>
<span class="t" style="left:629.74px;top:640px;font-size:13px;color:#000;letter-spacing:0.113px;">Artikel</span>
<span class="t" style="left:535.74px;top:640px;font-size:13px;color:#000;letter-spacing:-0.205px;">01.40.0060</span>
<span class="t" style="left:705.20px;top:640px;font-size:13px;color:#000;letter-spacing:0.024px;">Unterdecke einbauen Gipsfaserplatten, UK sichtbarer/verdeckt</span>
<span class="t" style="left:1562.98px;top:640px;font-size:13px;color:#000;letter-spacing:-0.168px;">120,000</span>
<span class="t" style="left:1662.98px;top:640px;font-size:13px;color:#000;letter-spacing:-0.168px;">120,000</span>
<span class="t" style="left:1776.84px;top:640px;font-size:13px;color:#000;letter-spacing:-0.104px;">0,000</span>
<span class="t" style="left:1818.00px;top:640px;font-size:13px;color:#000;">m2</span>
<div style="left:1913px;top:641px;width:16px;height:16px;background:#E6002D;"></div>
<div style="left:349px;top:662px;width:1653px;height:23px;background:#CAE3F8;"></div>
<div style="left:349px;top:685px;width:1653px;height:1px;background:#BFBFBF;"></div>
<div style="left:531px;top:662px;width:1px;height:23px;background:#BFBFBF;"></div>
<div style="left:625px;top:662px;width:1px;height:23px;background:#BFBFBF;"></div>
<div style="left:700px;top:662px;width:1px;height:23px;background:#BFBFBF;"></div>
<div style="left:1375px;top:662px;width:1px;height:23px;background:#BFBFBF;"></div>
<div style="left:1543px;top:662px;width:1px;height:23px;background:#BFBFBF;"></div>
<div style="left:1613px;top:662px;width:1px;height:23px;background:#BFBFBF;"></div>
<div style="left:1713px;top:662px;width:1px;height:23px;background:#BFBFBF;"></div>
<div style="left:1813px;top:662px;width:1px;height:23px;background:#BFBFBF;"></div>
<div style="left:1858px;top:662px;width:1px;height:23px;background:#BFBFBF;"></div>
<div style="left:1983px;top:662px;width:1px;height:23px;background:#BFBFBF;"></div>
<svg style="left:410px;top:666px;" width="12" height="17" viewBox="0 0 12 17"><path d="M0.5 0.3H7.3L11 4V16.4H0.5Z" fill="#6C757D"/><path d="M7.6 0.3V3.7H11Z" fill="#fff" opacity="0.55"/></svg>
<span class="t" style="left:432.74px;top:664px;font-size:13px;color:#000;letter-spacing:-0.106px;">VK Preis fix</span>
<span class="t" style="left:629.74px;top:664px;font-size:13px;color:#000;letter-spacing:0.113px;">Artikel</span>
<span class="t" style="left:535.74px;top:664px;font-size:13px;color:#000;letter-spacing:-0.205px;">01.40.0070</span>
<span class="t" style="left:705.20px;top:664px;font-size:13px;color:#000;letter-spacing:-0.062px;">Deckenanschluss Montagewand, gleitend Einfachständer CW 75</span>
<span class="t" style="left:1562.98px;top:664px;font-size:13px;color:#000;letter-spacing:-0.168px;">200,000</span>
<span class="t" style="left:1662.98px;top:664px;font-size:13px;color:#000;letter-spacing:-0.168px;">250,000</span>
<span class="t" style="left:1776.84px;top:664px;font-size:13px;color:#000;letter-spacing:-0.104px;">0,000</span>
<span class="t" style="left:1818.00px;top:664px;font-size:13px;color:#000;">m</span>
<div style="left:1913px;top:665px;width:16px;height:16px;background:#E6002D;"></div>
<div style="left:349px;top:686px;width:1653px;height:23px;background:#CAE3F8;"></div>
<div style="left:349px;top:709px;width:1653px;height:1px;background:#BFBFBF;"></div>
<div style="left:531px;top:686px;width:1px;height:23px;background:#BFBFBF;"></div>
<div style="left:625px;top:686px;width:1px;height:23px;background:#BFBFBF;"></div>
<div style="left:700px;top:686px;width:1px;height:23px;background:#BFBFBF;"></div>
<div style="left:1375px;top:686px;width:1px;height:23px;background:#BFBFBF;"></div>
<div style="left:1543px;top:686px;width:1px;height:23px;background:#BFBFBF;"></div>
<div style="left:1613px;top:686px;width:1px;height:23px;background:#BFBFBF;"></div>
<div style="left:1713px;top:686px;width:1px;height:23px;background:#BFBFBF;"></div>
<div style="left:1813px;top:686px;width:1px;height:23px;background:#BFBFBF;"></div>
<div style="left:1858px;top:686px;width:1px;height:23px;background:#BFBFBF;"></div>
<div style="left:1983px;top:686px;width:1px;height:23px;background:#BFBFBF;"></div>
<svg style="left:410px;top:690px;" width="12" height="17" viewBox="0 0 12 17"><path d="M0.5 0.3H7.3L11 4V16.4H0.5Z" fill="#6C757D"/><path d="M7.6 0.3V3.7H11Z" fill="#fff" opacity="0.55"/></svg>
<span class="t" style="left:432.74px;top:688px;font-size:13px;color:#000;letter-spacing:-0.106px;">VK Preis fix</span>
<span class="t" style="left:629.74px;top:688px;font-size:13px;color:#000;letter-spacing:0.113px;">Artikel</span>
<span class="t" style="left:535.74px;top:688px;font-size:13px;color:#000;letter-spacing:-0.205px;">01.40.0080</span>
<span class="t" style="left:705.20px;top:688px;font-size:13px;color:#000;letter-spacing:0.018px;">Vorsatzschale, Verbundplatten, Gipsplatten 12,5mm,Batzenverf Mineralwolle 30 mm 5-20 m2</span>
<span class="t" style="left:1576.84px;top:688px;font-size:13px;color:#000;letter-spacing:-0.104px;">0,000</span>
<span class="t" style="left:1662.98px;top:688px;font-size:13px;color:#000;letter-spacing:-0.168px;">360,000</span>
<span class="t" style="left:1776.84px;top:688px;font-size:13px;color:#000;letter-spacing:-0.104px;">0,000</span>
<span class="t" style="left:1818.00px;top:688px;font-size:13px;color:#000;">m2</span>
<div style="left:1913px;top:689px;width:16px;height:16px;background:#E6002D;"></div>
<div style="left:349px;top:710px;width:1653px;height:23px;background:#CAE3F8;"></div>
<div style="left:349px;top:733px;width:1653px;height:1px;background:#BFBFBF;"></div>
<div style="left:531px;top:710px;width:1px;height:23px;background:#BFBFBF;"></div>
<div style="left:625px;top:710px;width:1px;height:23px;background:#BFBFBF;"></div>
<div style="left:700px;top:710px;width:1px;height:23px;background:#BFBFBF;"></div>
<div style="left:1375px;top:710px;width:1px;height:23px;background:#BFBFBF;"></div>
<div style="left:1543px;top:710px;width:1px;height:23px;background:#BFBFBF;"></div>
<div style="left:1613px;top:710px;width:1px;height:23px;background:#BFBFBF;"></div>
<div style="left:1713px;top:710px;width:1px;height:23px;background:#BFBFBF;"></div>
<div style="left:1813px;top:710px;width:1px;height:23px;background:#BFBFBF;"></div>
<div style="left:1858px;top:710px;width:1px;height:23px;background:#BFBFBF;"></div>
<div style="left:1983px;top:710px;width:1px;height:23px;background:#BFBFBF;"></div>
<svg style="left:410px;top:714px;" width="12" height="17" viewBox="0 0 12 17"><path d="M0.5 0.3H7.3L11 4V16.4H0.5Z" fill="#6C757D"/><path d="M7.6 0.3V3.7H11Z" fill="#fff" opacity="0.55"/></svg>
<span class="t" style="left:432.74px;top:712px;font-size:13px;color:#000;letter-spacing:-0.106px;">VK Preis fix</span>
<span class="t" style="left:629.74px;top:712px;font-size:13px;color:#000;letter-spacing:0.113px;">Artikel</span>
<span class="t" style="left:535.74px;top:712px;font-size:13px;color:#000;letter-spacing:-0.205px;">01.40.0090</span>
<span class="t" style="left:705.20px;top:712px;font-size:13px;color:#000;letter-spacing:0.031px;">Öffnung für Fenster, in best. Vorsatzschale mit UK aus Holz, freistehend bis 1 m2</span>
<span class="t" style="left:1576.84px;top:712px;font-size:13px;color:#000;letter-spacing:-0.104px;">0,000</span>
<span class="t" style="left:1662.98px;top:712px;font-size:13px;color:#000;letter-spacing:-0.168px;">210,000</span>
<span class="t" style="left:1776.84px;top:712px;font-size:13px;color:#000;letter-spacing:-0.104px;">0,000</span>
<span class="t" style="left:1818.00px;top:712px;font-size:13px;color:#000;">St</span>
<div style="left:1913px;top:713px;width:16px;height:16px;background:#E6002D;"></div>
<div style="left:349px;top:734px;width:1653px;height:23px;background:#CAE3F8;"></div>
<div style="left:349px;top:757px;width:1653px;height:1px;background:#BFBFBF;"></div>
<div style="left:531px;top:734px;width:1px;height:23px;background:#BFBFBF;"></div>
<div style="left:625px;top:734px;width:1px;height:23px;background:#BFBFBF;"></div>
<div style="left:700px;top:734px;width:1px;height:23px;background:#BFBFBF;"></div>
<div style="left:1375px;top:734px;width:1px;height:23px;background:#BFBFBF;"></div>
<div style="left:1543px;top:734px;width:1px;height:23px;background:#BFBFBF;"></div>
<div style="left:1613px;top:734px;width:1px;height:23px;background:#BFBFBF;"></div>
<div style="left:1713px;top:734px;width:1px;height:23px;background:#BFBFBF;"></div>
<div style="left:1813px;top:734px;width:1px;height:23px;background:#BFBFBF;"></div>
<div style="left:1858px;top:734px;width:1px;height:23px;background:#BFBFBF;"></div>
<div style="left:1983px;top:734px;width:1px;height:23px;background:#BFBFBF;"></div>
<svg style="left:410px;top:738px;" width="12" height="17" viewBox="0 0 12 17"><path d="M0.5 0.3H7.3L11 4V16.4H0.5Z" fill="#6C757D"/><path d="M7.6 0.3V3.7H11Z" fill="#fff" opacity="0.55"/></svg>
<span class="t" style="left:432.74px;top:736px;font-size:13px;color:#000;letter-spacing:-0.106px;">VK Preis fix</span>
<span class="t" style="left:629.74px;top:736px;font-size:13px;color:#000;letter-spacing:0.113px;">Artikel</span>
<span class="t" style="left:535.74px;top:736px;font-size:13px;color:#000;letter-spacing:-0.205px;">01.40.0100</span>
<span class="t" style="left:705.20px;top:736px;font-size:13px;color:#000;letter-spacing:-0.138px;">Brandschutzbekl. Unterzug, an Decke, UK Stahl, CD 60 x 06, GF, 1 x 10 mm, F 30 A/B, bis 0,75 m</span>
<span class="t" style="left:1576.84px;top:736px;font-size:13px;color:#000;letter-spacing:-0.104px;">0,000</span>
<span class="t" style="left:1669.90px;top:736px;font-size:13px;color:#000;letter-spacing:-0.141px;">50,000</span>
<span class="t" style="left:1776.84px;top:736px;font-size:13px;color:#000;letter-spacing:-0.104px;">0,000</span>
<span class="t" style="left:1818.00px;top:736px;font-size:13px;color:#000;">m</span>
<div style="left:1913px;top:737px;width:16px;height:16px;background:#E6002D;"></div>
<div style="left:349px;top:758px;width:1653px;height:23px;background:#CAE3F8;"></div>
<div style="left:349px;top:781px;width:1653px;height:1px;background:#BFBFBF;"></div>
<div style="left:531px;top:758px;width:1px;height:23px;background:#BFBFBF;"></div>
<div style="left:625px;top:758px;width:1px;height:23px;background:#BFBFBF;"></div>
<div style="left:700px;top:758px;width:1px;height:23px;background:#BFBFBF;"></div>
<div style="left:1375px;top:758px;width:1px;height:23px;background:#BFBFBF;"></div>
<div style="left:1543px;top:758px;width:1px;height:23px;background:#BFBFBF;"></div>
<div style="left:1613px;top:758px;width:1px;height:23px;background:#BFBFBF;"></div>
<div style="left:1713px;top:758px;width:1px;height:23px;background:#BFBFBF;"></div>
<div style="left:1813px;top:758px;width:1px;height:23px;background:#BFBFBF;"></div>
<div style="left:1858px;top:758px;width:1px;height:23px;background:#BFBFBF;"></div>
<div style="left:1983px;top:758px;width:1px;height:23px;background:#BFBFBF;"></div>
<svg style="left:410px;top:762px;" width="12" height="17" viewBox="0 0 12 17"><path d="M0.5 0.3H7.3L11 4V16.4H0.5Z" fill="#6C757D"/><path d="M7.6 0.3V3.7H11Z" fill="#fff" opacity="0.55"/></svg>
<span class="t" style="left:432.74px;top:760px;font-size:13px;color:#000;letter-spacing:-0.106px;">VK Preis fix</span>
<span class="t" style="left:629.74px;top:760px;font-size:13px;color:#000;letter-spacing:0.113px;">Artikel</span>
<span class="t" style="left:535.74px;top:760px;font-size:13px;color:#000;letter-spacing:-0.198px;">01.40.0110</span>
<span class="t" style="left:705.20px;top:760px;font-size:13px;color:#000;letter-spacing:-0.123px;">Brandschutzbekl. Unterzug, an Decke, UK Stahl, CD 60 x 06, GP Typ DF, 3 x 12,5 mm, F 90 A/B, über 1,5 bis 2,5 m</span>
<span class="t" style="left:1576.84px;top:760px;font-size:13px;color:#000;letter-spacing:-0.104px;">0,000</span>
<span class="t" style="left:1669.90px;top:760px;font-size:13px;color:#000;letter-spacing:-0.141px;">65,000</span>
<span class="t" style="left:1776.84px;top:760px;font-size:13px;color:#000;letter-spacing:-0.104px;">0,000</span>
<span class="t" style="left:1818.00px;top:760px;font-size:13px;color:#000;">m</span>
<div style="left:1913px;top:761px;width:16px;height:16px;background:#E6002D;"></div>
<div style="left:349px;top:782px;width:1653px;height:23px;background:#CAE3F8;"></div>
<div style="left:349px;top:805px;width:1653px;height:1px;background:#BFBFBF;"></div>
<div style="left:531px;top:782px;width:1px;height:23px;background:#BFBFBF;"></div>
<div style="left:625px;top:782px;width:1px;height:23px;background:#BFBFBF;"></div>
<div style="left:700px;top:782px;width:1px;height:23px;background:#BFBFBF;"></div>
<div style="left:1375px;top:782px;width:1px;height:23px;background:#BFBFBF;"></div>
<div style="left:1543px;top:782px;width:1px;height:23px;background:#BFBFBF;"></div>
<div style="left:1613px;top:782px;width:1px;height:23px;background:#BFBFBF;"></div>
<div style="left:1713px;top:782px;width:1px;height:23px;background:#BFBFBF;"></div>
<div style="left:1813px;top:782px;width:1px;height:23px;background:#BFBFBF;"></div>
<div style="left:1858px;top:782px;width:1px;height:23px;background:#BFBFBF;"></div>
<div style="left:1983px;top:782px;width:1px;height:23px;background:#BFBFBF;"></div>
<svg style="left:410px;top:786px;" width="12" height="17" viewBox="0 0 12 17"><path d="M0.5 0.3H7.3L11 4V16.4H0.5Z" fill="#6C757D"/><path d="M7.6 0.3V3.7H11Z" fill="#fff" opacity="0.55"/></svg>
<span class="t" style="left:432.74px;top:784px;font-size:13px;color:#000;letter-spacing:-0.106px;">VK Preis fix</span>
<span class="t" style="left:629.74px;top:784px;font-size:13px;color:#000;letter-spacing:0.113px;">Artikel</span>
<span class="t" style="left:535.74px;top:784px;font-size:13px;color:#000;letter-spacing:-0.205px;">01.40.0120</span>
<span class="t" style="left:705.20px;top:784px;font-size:13px;color:#000;letter-spacing:-0.071px;">Brandschutzbekl. Rohr/Kanal, vor Wand, UK Stahl,  GF, 1x10 mm+1x12,5, F 30 A/B über 0,75 bis 1,5 m</span>
<span class="t" style="left:1576.84px;top:784px;font-size:13px;color:#000;letter-spacing:-0.104px;">0,000</span>
<span class="t" style="left:1669.90px;top:784px;font-size:13px;color:#000;letter-spacing:-0.141px;">70,000</span>
<span class="t" style="left:1776.84px;top:784px;font-size:13px;color:#000;letter-spacing:-0.104px;">0,000</span>
<span class="t" style="left:1818.00px;top:784px;font-size:13px;color:#000;">m</span>
<div style="left:1913px;top:785px;width:16px;height:16px;background:#E6002D;"></div>
<div style="left:349px;top:806px;width:1653px;height:3px;background:#CAE3F8;"></div>
<div style="left:531px;top:806px;width:1px;height:3px;background:#BFBFBF;"></div>
<div style="left:625px;top:806px;width:1px;height:3px;background:#BFBFBF;"></div>
<div style="left:700px;top:806px;width:1px;height:3px;background:#BFBFBF;"></div>
<div style="left:1375px;top:806px;width:1px;height:3px;background:#BFBFBF;"></div>
<div style="left:1543px;top:806px;width:1px;height:3px;background:#BFBFBF;"></div>
<div style="left:1613px;top:806px;width:1px;height:3px;background:#BFBFBF;"></div>
<div style="left:1713px;top:806px;width:1px;height:3px;background:#BFBFBF;"></div>
<div style="left:1813px;top:806px;width:1px;height:3px;background:#BFBFBF;"></div>
<div style="left:1858px;top:806px;width:1px;height:3px;background:#BFBFBF;"></div>
<div style="left:1983px;top:806px;width:1px;height:3px;background:#BFBFBF;"></div>
<div style="left:2003px;top:374px;width:15px;height:419px;background:#F0F0F0;"></div>
<div style="left:2003px;top:375px;width:15px;height:14px;background:#fff;border:1px solid #D9D9D9;box-sizing:border-box;"></div>
<svg style="left:2003px;top:375px;" width="15" height="14" viewBox="0 0 15 14"><path d="M2.7 9.6H12.3L7.5 4.0Z" fill="#808080"/></svg>
<div style="left:2003px;top:794px;width:15px;height:14px;background:#fff;border:1px solid #D9D9D9;box-sizing:border-box;"></div>
<svg style="left:2003px;top:794px;" width="15" height="14" viewBox="0 0 15 14"><path d="M2.7 4.4H12.3L7.5 10.0Z" fill="#808080"/></svg>
<div style="left:2003px;top:390px;width:15px;height:62px;background:#CAE3F8;border:1px solid #C3CDD6;box-sizing:border-box;"></div>
<div style="left:349px;top:810px;width:1637px;height:15px;background:#F0F0F0;"></div>
<div style="left:350px;top:810px;width:14px;height:15px;background:#fff;border:1px solid #D9D9D9;box-sizing:border-box;"></div>
<svg style="left:350px;top:810px;" width="14" height="15" viewBox="0 0 14 15"><path d="M9.6 2.7V12.3L4.0 7.5Z" fill="#808080"/></svg>
<div style="left:1987px;top:810px;width:14px;height:15px;background:#fff;border:1px solid #D9D9D9;box-sizing:border-box;"></div>
<svg style="left:1987px;top:810px;" width="14" height="15" viewBox="0 0 14 15"><path d="M4.4 2.7V12.3L10.0 7.5Z" fill="#808080"/></svg>
<div style="left:365px;top:810px;width:194px;height:15px;background:#CAE3F8;border:1px solid #C3CDD6;box-sizing:border-box;"></div>
<svg style="left:353px;top:826px;" width="27" height="11" viewBox="0 0 27 11"><path d="M5 10V1.6M1 5.6L5 1.6L9 5.6M20.6 1V9.4M16.6 5.4L20.6 9.4L24.6 5.4" stroke="#808080" stroke-width="1.1" fill="none"/></svg>
<div style="left:383px;top:831px;width:1656px;height:1px;background:#DCDCDC;"></div>
<div style="left:1174px;top:829px;width:36px;height:1px;background:#E4E4E4;"></div>
<div style="left:1174px;top:833px;width:36px;height:1px;background:#E4E4E4;"></div>
</main>
<section aria-label="Details">
<div style="left:349px;top:873px;width:1690px;height:1px;background:#D2D2D2;"></div>
<div style="left:356px;top:842px;width:114px;height:32px;background:#fff;border:1px solid #D2D2D2;box-sizing:border-box;border-bottom:none;"></div>
<span class="t" style="left:371.20px;top:849px;font-size:15px;color:#666;font-weight:700;letter-spacing:-0.044px;">Grunddaten</span>
<span class="t" style="left:484.70px;top:849px;font-size:15px;color:#7A7A7A;letter-spacing:0.203px;">Info Vorgänge</span>
<span class="t" style="left:609.70px;top:849px;font-size:15px;color:#7A7A7A;letter-spacing:-0.497px;">EK-Preise</span>
<span class="t" style="left:701.70px;top:849px;font-size:15px;color:#7A7A7A;letter-spacing:-0.110px;">Preisanteile</span>
<span class="t" style="left:807.70px;top:849px;font-size:15px;color:#7A7A7A;letter-spacing:-0.114px;">Preishistorie</span>
<span class="t" style="left:917.70px;top:849px;font-size:15px;color:#7A7A7A;letter-spacing:-0.032px;">Offene Bestellungen</span>
<span class="t" style="left:1081.70px;top:849px;font-size:15px;color:#7A7A7A;letter-spacing:0.137px;">Rohstoffwerte</span>
<span class="t" style="left:1204.70px;top:849px;font-size:15px;color:#7A7A7A;letter-spacing:-0.127px;">EK-Rabatt</span>
<span class="t" style="left:1301.70px;top:849px;font-size:15px;color:#7A7A7A;letter-spacing:-0.127px;">Seriennummern</span>
<span class="t" style="left:1435.70px;top:849px;font-size:15px;color:#7A7A7A;letter-spacing:0.037px;">Heating Label</span>
<span class="t" style="left:414.23px;top:888px;font-size:12px;color:#707070;letter-spacing:-0.350px;">Eb-/Pos-Nr</span>
<span class="t" style="left:482.74px;top:890px;font-size:13px;color:#000;letter-spacing:-0.265px;">01.40.0040</span>
<span class="t" style="left:440.20px;top:922px;font-size:11.75px;color:#707070;letter-spacing:-0.375px;">Name</span>
<span class="t" style="left:483.00px;top:922px;font-size:13px;color:#000;letter-spacing:-0.023px;">Türgestell Wände 2,6 m</span>
<span class="t" style="left:428.31px;top:954px;font-size:12px;color:#707070;letter-spacing:-0.272px;">Kurztext</span>
<span class="t" style="left:483.00px;top:954px;font-size:13px;color:#000;letter-spacing:0.048px;">Öffnung für Tür, in Montagewand, UK Metall Einfachständer, CW 75 x</span>
<span class="t" style="left:429.13px;top:986px;font-size:12px;color:#707070;letter-spacing:-0.453px;">Pos-Typ</span>
<span class="t" style="left:482.74px;top:986px;font-size:13px;color:#000;letter-spacing:0.113px;">Artikel</span>
<span class="t" style="left:433.61px;top:1018px;font-size:12px;color:#707070;letter-spacing:0.030px;">Menge</span>
<span class="t" style="left:482.74px;top:1018px;font-size:13px;color:#000;letter-spacing:-0.225px;">250,000</span>
<span class="t" style="left:963.93px;top:888px;font-size:12px;color:#707070;letter-spacing:-0.152px;">Maßeinheit</span>
<span class="t" style="left:1035.00px;top:890px;font-size:13px;color:#000;">St</span>
<span class="t" style="left:948.92px;top:922px;font-size:12px;color:#707070;letter-spacing:-0.157px;">Kostengruppe</span>
<span class="t" style="left:950.04px;top:954px;font-size:12px;color:#707070;letter-spacing:-0.038px;">Warengruppe</span>
<span class="t" style="left:1034.74px;top:954px;font-size:13px;color:#000;letter-spacing:0.164px;">Warengr. Trockenbau</span>
<span class="t" style="left:921.01px;top:986px;font-size:12px;color:#707070;letter-spacing:-0.068px;">Kalkulationsgruppe</span>
<span class="t" style="left:1472.87px;top:888px;font-size:12px;color:#707070;letter-spacing:-0.212px;">Langtext</span>
<div style="left:1528px;top:888px;width:232px;height:27px;background:#fff;border:1px solid #D4D4D4;box-sizing:border-box;"></div>
<div style="left:1762px;top:888px;width:232px;height:27px;background:#fff;border:1px solid #D4D4D4;box-sizing:border-box;"></div>
<span class="t" style="left:1599.05px;top:893px;font-size:13px;color:#707070;letter-spacing:0.135px;">Text bearbeiten</span>
<div style="left:1627px;top:909px;width:7px;height:1px;background:#707070;"></div>
<span class="t" style="left:1850.55px;top:893px;font-size:13px;color:#707070;letter-spacing:0.089px;">Vorschau</span>
<div style="left:1851px;top:909px;width:8px;height:1px;background:#707070;"></div>
<div style="left:1527px;top:916px;width:452px;height:141px;background:#fff;border:1px solid #C6C6C6;box-sizing:border-box;"></div>
<span class="t" style="left:1533.00px;top:922px;font-size:13px;color:#000;letter-spacing:0.149px;">Öffnung für Tür, in zu erstellender Montagewand mit</span>
<span class="t" style="left:1533.00px;top:940px;font-size:13px;color:#000;letter-spacing:0.057px;">Unterkonstruktion aus Metall,</span>
<span class="t" style="left:1533.00px;top:958px;font-size:13px;color:#000;letter-spacing:-0.085px;">in Einfachständerwand, Beplankung aus Gips-</span>
<span class="t" style="left:1533.00px;top:976px;font-size:13px;color:#000;letter-spacing:0.045px;">/Gipsfaserplatten, ein-/zweilagig,max. Wandhöhe 2,6</span>
<span class="t" style="left:1533.00px;top:994px;font-size:13px;color:#000;letter-spacing:0.049px;">m,Türpfostenprofile CW 75 x 06,Türsturzprofil UW 75 x</span>
<span class="t" style="left:1533.00px;top:1012px;font-size:13px;color:#000;letter-spacing:0.030px;">06,für Türblattgewicht bis 25 kg,</span>
<span class="t" style="left:1533.00px;top:1030px;font-size:13px;color:#000;letter-spacing:-0.055px;">Rohbaurichtmaß B x H über 1,26 bis 1,51 x 2,51 m</span>
<div style="left:1980px;top:917px;width:15px;height:139px;background:#F0F0F0;"></div>
<div style="left:1980px;top:918px;width:15px;height:13px;background:#fff;border:1px solid #D9D9D9;box-sizing:border-box;"></div>
<svg style="left:1980px;top:918px;" width="15" height="13" viewBox="0 0 15 13"><path d="M2.7 9.1H12.3L7.5 3.5Z" fill="#808080"/></svg>
<div style="left:1980px;top:1042px;width:15px;height:13px;background:#fff;border:1px solid #D9D9D9;box-sizing:border-box;"></div>
<svg style="left:1980px;top:1042px;" width="15" height="13" viewBox="0 0 15 13"><path d="M2.7 3.9H12.3L7.5 9.5Z" fill="#808080"/></svg>
<div style="left:1980px;top:932px;width:15px;height:96px;background:#CAE3F8;border:1px solid #C3CDD6;box-sizing:border-box;"></div>
<div style="left:2022px;top:875px;width:15px;height:184px;background:#F0F0F0;"></div>
<div style="left:2022px;top:876px;width:15px;height:14px;background:#fff;border:1px solid #D9D9D9;box-sizing:border-box;"></div>
<svg style="left:2022px;top:876px;" width="15" height="14" viewBox="0 0 15 14"><path d="M2.7 9.6H12.3L7.5 4.0Z" fill="#808080"/></svg>
<div style="left:2022px;top:1045px;width:15px;height:13px;background:#fff;border:1px solid #D9D9D9;box-sizing:border-box;"></div>
<svg style="left:2022px;top:1045px;" width="15" height="13" viewBox="0 0 15 13"><path d="M2.7 3.9H12.3L7.5 9.5Z" fill="#808080"/></svg>
<div style="left:2022px;top:891px;width:15px;height:148px;background:#CAE3F8;border:1px solid #C3CDD6;box-sizing:border-box;"></div>
</section>
<footer>
<div style="left:1958px;top:1072px;width:56px;height:27px;background:#0063B1;border:1px solid #fff;box-sizing:border-box;"></div>
<span class="t" style="left:1976.61px;top:1077px;font-size:13px;color:#fff;">OK</span>
</footer>
<svg style="left:0;top:0" width="2048" height="72" viewBox="0 0 2048 72"><rect x="1879.5" y="4.5" width="9" height="7" fill="none" stroke="#fff" stroke-width="1"/><rect x="1884" y="8" width="10.5" height="7" fill="#fff"/><rect x="1916.5" y="5.5" width="14.5" height="10.5" fill="none" stroke="#fff" stroke-width="1.3"/><path d="M1920.5 10.7H1927M1923.7 7.5V14" stroke="#fff" stroke-width="1.1"/><rect x="1952" y="15" width="15" height="1" fill="#fff"/><path d="M1994.5 10V5.5H2004.5V11.5H2000.5" fill="none" stroke="#fff" stroke-width="1"/><rect x="1990.5" y="10.5" width="10" height="5" fill="none" stroke="#fff" stroke-width="1"/><path d="M2029 5.3L2040 16.3M2040 5.3L2029 16.3" stroke="#fff" stroke-width="1.1"/><path d="M1986.00 33.60 L1989.00 42.47 L1998.36 42.58 L1990.85 48.18 L1993.64 57.12 L1986.00 51.70 L1978.36 57.12 L1981.15 48.18 L1973.64 42.58 L1983.00 42.47Z" fill="#fff"/><rect x="2016" y="36" width="20" height="4" fill="#fff"/><rect x="2016" y="44" width="20" height="4" fill="#fff"/><rect x="2016" y="52" width="20" height="4" fill="#fff"/><rect x="45" y="28" width="1" height="36" fill="#C2CFDB"/><rect x="332" y="28" width="1" height="36" fill="#C2CFDB"/><rect x="627" y="28" width="1" height="36" fill="#C2CFDB"/><path d="M7.8 47.2L15 47.2L19.8 52.4Q27.5 46.5 32.4 35.6L37 42.6Q31.5 55.5 24 56.6Q16 55.5 7.8 47.2Z" fill="#fff"/><circle cx="68" cy="45" r="9" fill="none" stroke="#fff" stroke-width="2"/><path d="M74.6 51.8L80.3 57.3" stroke="#fff" stroke-width="2.2"/><path d="M64.2 41.6H66.3L68 46.6L69.7 41.6H71.8L69 48.7H67Z" fill="#fff"/><path d="M109 57.0H102.0V35.0H111.0L116.0 40.0V44.5" stroke="#fff" stroke-width="2" fill="none" stroke-linejoin="miter"/><path d="M111.0 35.0V40.0H116.0" stroke="#fff" stroke-width="2" fill="none"/><path d="M113.4 46H120.3L118.6 48.9H115.1Z" fill="#fff"/><path d="M115 49.2H118.7Q122.9 52 122.9 56.6Q122.9 61 116.9 61Q110.8 61 110.8 56.6Q110.8 52 115 49.2Z" fill="#fff"/><path d="M119.3 53.5Q116.2 52.3 115.2 56.2Q116 59.8 119.3 58.7M113.6 55.3H117.8M113.6 56.9H117.6" stroke="#0072C6" stroke-width="1" fill="none"/><path d="M157 35H145Q142.1 35 142.1 38V54Q142.1 57 145 57H157M142.1 53.8Q142.1 50.8 145 50.8H156.2V35" fill="none" stroke="#fff" stroke-width="2"/><path d="M156.2 50.8L153.8 53.9L156.2 57" fill="none" stroke="#fff" stroke-width="1.6"/><path d="M152.7 39.2Q148.3 36.6 146.3 42.8Q148.3 49 152.7 46.4M144.3 41.6H150.6M144.3 43.9H150.2" stroke="#fff" stroke-width="1.5" fill="none"/><ellipse cx="188.9" cy="40.8" rx="5.2" ry="6.2" fill="#fff"/><path d="M186.04 44.519999999999996V48.8Q185.78 50.2 180.816 52.4Q178.8 53.199999999999996 178.8 55.8H195.6Q195.6 53.199999999999996 193.584 52.4Q192.02 50.2 191.76000000000002 48.8V44.519999999999996Z" fill="#fff"/><circle cx="198.1" cy="55" r="6.2" fill="#0072C6"/><path d="M193.2 55H203.0M198.1 50.1V59.9" stroke="#fff" stroke-width="2.2" fill="none"/><rect x="222" y="35.1" width="4.6" height="21.8" fill="none" stroke="#fff" stroke-width="2"/><rect x="223.5" y="38" width="1.7" height="12" fill="#fff"/><rect x="223.6" y="52" width="1.6" height="1.8" fill="#CFE2F3"/><path d="M227.6 34.1H230L237 37.6V58H227.6Z" fill="#fff"/><circle cx="238" cy="55" r="6.2" fill="#0072C6"/><path d="M233.1 55H242.9M238 50.1V59.9" stroke="#fff" stroke-width="2.2" fill="none"/><path d="M260 36V54.8H278.8" fill="none" stroke="#fff" stroke-width="2.1"/><path d="M263.8 51.5L268.5 44.6L272.3 48L277.4 37.6" fill="none" stroke="#fff" stroke-width="2"/><path d="M303.2 36.6Q301 36.6 300 39Q299 42.5 303 47.8Q308 54 313 55.2Q316.5 55.8 318.3 52.8Q318.8 51.6 317.8 50.8L314.6 48.4Q313.4 47.8 312.4 48.8L311.6 50.2Q307.5 48.6 304.8 43.6L306.7 42.6Q307.6 41.8 307 40.6L304.8 37.4Q304.2 36.6 303.2 36.6Z" fill="#fff"/><path d="M349 35.8H366V55.8H346V39Z" fill="#fff"/><path d="M350.8 35.8V43.4Q350.8 44.9 352.3 44.9H359.8Q361.3 44.9 361.3 43.4V35.8" fill="none" stroke="#0072C6" stroke-width="1.4"/><rect x="354" y="38" width="1.8" height="3.6" fill="#0072C6"/><path d="M406.2 44.5A10.2 10.2 0 1 0 404.3 52" fill="none" stroke="#fff" stroke-width="2"/><path d="M401.8 44.4L406 48.9L410.2 44.3" fill="none" stroke="#fff" stroke-width="2"/><path d="M431 38V34.9H439.2V38" fill="none" stroke="#fff" stroke-width="2"/><rect x="425" y="38" width="20" height="2" fill="#fff"/><path d="M425.4 42H444.6V43.8H443.6L442.2 58H427.8L426.4 43.8H425.4Z" fill="#fff"/><path d="M431.2 44.8V55.2M435 44.8V55.2M438.8 44.8V55.2" stroke="#0072C6" stroke-width="1.7"/><path d="M465 36.8H485V59L480.5 54.8H465Z" fill="none" stroke="#fff" stroke-width="2"/><path d="M480 54.8H486V60.3Z" fill="#fff"/><path d="M474.6 39.0L476.3 40.7L474.6 42.400000000000006L472.90000000000003 40.7Z" fill="#fff"/><path d="M472.0 44.4H475.70000000000005V49.9H477.8V51.6H471.6V49.9H473.5V46.1H472.0Z" fill="#fff"/><path d="M495.5 44H505.7L500.6 49.2Z" fill="#fff"/><path d="M534.02 55.38 L533.65 58.09 L530.35 58.09 L529.98 55.38 L525.93 53.43 L523.58 54.83 L521.52 52.24 L523.40 50.27 L522.40 45.89 L519.85 44.92 L520.58 41.70 L523.30 41.94 L526.10 38.42 L525.27 35.83 L528.25 34.39 L529.75 36.67 L534.25 36.67 L535.75 34.39 L538.73 35.83 L537.90 38.42 L540.70 41.94 L543.42 41.70 L544.15 44.92 L541.60 45.89 L540.60 50.27 L542.48 52.24 L540.42 54.83 L538.07 53.43Z M524.9 46a7.1 7.1 0 1 0 14.2 0a7.1 7.1 0 1 0 -14.2 0Z" fill="#fff" fill-rule="evenodd" stroke="#fff" stroke-width="1.2" stroke-linejoin="round"/><path d="M551.4 44H561.6L556.5 49.2Z" fill="#fff"/><path d="M579.0 49V54.8H599.0V49" stroke="#fff" stroke-width="2" fill="none"/><path d="M589 40V49.4M585 46L589 50L593 46" fill="none" stroke="#fff" stroke-width="2"/><path d="M607.2 44H617.4000000000001L612.3000000000001 49.2Z" fill="#fff"/><rect x="650" y="35.1" width="12.2" height="13.8" fill="none" stroke="#fff" stroke-width="2"/><path d="M642 41H651L654 44V54.8H642Z" fill="#0072C6" stroke="#fff" stroke-width="2"/><path d="M651 41V44H654" fill="none" stroke="#fff" stroke-width="1.4"/><path d="M645 47H651M645 51H651" stroke="#fff" stroke-width="1.8"/><path d="M670.6 44H680.8000000000001L675.7 49.2Z" fill="#fff"/><path d="M698.0 48V54.8H718.0V48" stroke="#fff" stroke-width="2" fill="none"/><path d="M701.2 34.4L716.4 51.8H701.2Z" fill="#fff"/><path d="M703 42.6L709.6 50H703Z" fill="#0072C6"/><path d="M703.5 38.5L714.5 51" stroke="#0072C6" stroke-width="0.9" stroke-dasharray="0.9 1.1" fill="none" transform="translate(1.1,-0.6)"/><path d="M726.4 44H736.6L731.5 49.2Z" fill="#fff"/><path d="M758 41.5V35.1H765L768 38.1V41.5" fill="none" stroke="#fff" stroke-width="2"/><path d="M764.4 35.1V38.7H768" fill="none" stroke="#fff" stroke-width="1.6"/><path d="M754.5 41.2H771.5Q773 41.2 773 42.7V52.9H753V42.7Q753 41.2 754.5 41.2Z" fill="#fff"/><rect x="770" y="44" width="1.2" height="2" fill="#0072C6"/><rect x="758" y="49" width="10" height="8" fill="#0072C6" stroke="#fff" stroke-width="2"/><rect x="760.6" y="51" width="4.8" height="3.6" fill="#8FBCE3"/><path d="M782.5 44H792.7L787.6 49.2Z" fill="#fff"/><path d="M819 57.0H812.0V35.0H821.7L826.2 39.5V46.5" stroke="#fff" stroke-width="2" fill="none" stroke-linejoin="miter"/><path d="M821.7 35.0V39.5H826.2" stroke="#fff" stroke-width="2" fill="none"/><path d="M815 43H823M815 47H820.5M815 51H820.5" stroke="#fff" stroke-width="1.8"/><path d="M822 46V59M822.5 52.5L831 47.5M822.5 52.5L831 57.5" stroke="#fff" stroke-width="2" fill="none"/><path d="M828.5 45.2L833 46.6L830.6 50.4Z M828.5 59.8L833 58.4L830.6 54.6Z" fill="#fff" stroke="#fff" stroke-width="0.8"/><path d="M838.2 44H848.4000000000001L843.3000000000001 49.2Z" fill="#fff"/><path d="M865 36H883.2V54H865Z M867 38V43.8H873V38Z M867 46.2V51.9H873V46.2Z M875 46.2V51.9H881V46.2Z" fill="#fff" fill-rule="evenodd"/><path d="M894.4 44H904.6L899.5 49.2Z" fill="#fff"/><path d="M922 49V53.5Q922 55 923.5 55H940.5Q942 55 942 53.5V49" fill="none" stroke="#fff" stroke-width="2"/><path d="M932 50V40.8M928 44.2L932 40.2L936 44.2" fill="none" stroke="#fff" stroke-width="2"/><path d="M971 57.0H964.0V35.0H973.0L978.0 40.0V46" stroke="#fff" stroke-width="2" fill="none" stroke-linejoin="miter"/><path d="M973.0 35.0V40.0H978.0" stroke="#fff" stroke-width="2" fill="none"/><rect x="973" y="47.8" width="12.2" height="12.2" fill="#fff"/><path d="M975.9 47.8V52.2Q975.9 54.2 977.9 54.2H980.1Q982.1 54.2 982.1 52.2V47.8" fill="none" stroke="#0072C6" stroke-width="1.5"/><path d="M990.2 44H1000.4000000000001L995.3000000000001 49.2Z" fill="#fff"/><path d="M1018.0 48V54.8H1038.2V48" stroke="#fff" stroke-width="2" fill="none"/><path d="M1027.6 36.599999999999994L1029.3 38.3L1027.6 40.0L1025.8999999999999 38.3Z" fill="#fff"/><path d="M1025.0 42.1H1028.6999999999998V48.0H1030.8V49.7H1024.6V48.0H1026.5V43.800000000000004H1025.0Z" fill="#fff"/><path d="M1046.3 44H1056.5L1051.3999999999999 49.2Z" fill="#fff"/><rect x="1077" y="34.1" width="14" height="23.9" fill="#fff"/><rect x="1075.5" y="34.6" width="0.9" height="22.9" fill="#fff"/><rect x="1072.9" y="35.4" width="2.1" height="2" fill="#fff"/><rect x="1072.9" y="39.4" width="2.1" height="2" fill="#fff"/><rect x="1072.9" y="43.4" width="2.1" height="2" fill="#fff"/><rect x="1072.9" y="47.4" width="2.1" height="2" fill="#fff"/><rect x="1072.9" y="51.4" width="2.1" height="2" fill="#fff"/><rect x="1072.9" y="55.4" width="2.1" height="2" fill="#fff"/><path d="M1087.3 36.8L1082 42.1M1081.6 38.6V42.5H1085.5M1080.6 51.2L1085.9 45.9M1082.4 45.5H1086.3V49.4" stroke="#0072C6" stroke-width="1.5" fill="none"/><path d="M1087.8 50.6V60.6L1096.8 55.7Z" fill="#fff" stroke="#0072C6" stroke-width="1.2" stroke-linejoin="round"/><path d="M1088.4 51.6V59.6L1095.6 55.7Z" fill="#fff" stroke="#fff" stroke-width="0.8" stroke-linejoin="round"/><path d="M1102.5 44H1112.7L1107.6 49.2Z" fill="#fff"/><path d="M1136 44V42L1133 39H1128V53H1136V50" fill="none" stroke="#fff" stroke-width="2"/><path d="M1133 39V42H1136" fill="none" stroke="#fff" stroke-width="1.4"/><path d="M1142 39H1147L1150 42V53H1141.5" fill="none" stroke="#fff" stroke-width="2"/><path d="M1146.4 39V42.4H1150" fill="none" stroke="#fff" stroke-width="1.4"/><path d="M1132.6 46.8H1143M1140 43L1143.8 46.8L1140 50.6" fill="none" stroke="#fff" stroke-width="2"/><ellipse cx="1173.1" cy="40.6" rx="3.9" ry="4.6" fill="#fff"/><path d="M1170.955 43.36V47.0Q1170.76 48.400000000000006 1167.68 47.6Q1166 48.4 1166 51H1180Q1180 48.4 1178.32 47.6Q1175.4399999999998 48.400000000000006 1175.245 47.0V43.36Z" fill="#fff"/><ellipse cx="1182.8" cy="42" rx="4.9" ry="5.6" fill="#0072C6"/><path d="M1180.105 45.36V49.4Q1179.86 50.800000000000004 1175.28 51.800000000000004Q1173 52.6 1173 55.2H1192Q1192 52.6 1189.72 51.800000000000004Q1185.74 50.800000000000004 1185.495 49.4V45.36Z" fill="#0072C6"/><ellipse cx="1182.8" cy="42" rx="4.3" ry="5" fill="#fff"/><path d="M1180.435 45.0V48.8Q1180.22 50.2 1176.2160000000001 50.5Q1174.2 51.3 1174.2 53.9H1191Q1191 51.3 1188.984 50.5Q1185.3799999999999 50.2 1185.165 48.8V45.0Z" fill="#fff"/><path d="M1198.4 44H1208.6000000000001L1203.5 49.2Z" fill="#fff"/><path d="M1227.9 40.5V39A4 4 0 0 1 1235.9 39V41.5" fill="none" stroke="#fff" stroke-width="2.1"/><path d="M1226.4 39.9H1232.6V52H1226.4Q1224.9 52 1224.9 50.5V41.4Q1224.9 39.9 1226.4 39.9Z" fill="#fff"/><rect x="1231.6" y="44.9" width="16.8" height="14.4" rx="2" fill="#0072C6"/><path d="M1235.9 47V45.2A4.1 4.1 0 0 1 1244.1 45.2V47" fill="none" stroke="#fff" stroke-width="2.2"/><rect x="1232.8" y="46.1" width="14.4" height="12" rx="1.6" fill="#fff"/><circle cx="1240" cy="50.6" r="1.4" fill="#0072C6"/><rect x="1239.3" y="50.6" width="1.4" height="3.6" fill="#0072C6"/></svg>
<svg style="left:0;top:310px" width="2039" height="40" viewBox="0 310 2039 40"><path d="M260 324H269V325.7H264.4V330.4H269V332H264.4V336.4H270.2V338H262.3V325.7H260Z" fill="#0064B2"/><rect x="267.6" y="324" width="6.4" height="3.8" rx="1.9" fill="#0064B2"/><rect x="267.6" y="330.4" width="6.4" height="3.8" rx="1.9" fill="#0064B2"/><path d="M270.3 338.9H279.7M275 334.2V343.7" stroke="#0064B2" stroke-width="2" fill="none"/><path d="M284 330H293.2L288.6 336Z" fill="#0064B2"/><path d="M308 324H317V325.7H312.4V330.4H317V332H312.4V336.4H318.2V338H310.3V325.7H308Z" fill="#0064B2"/><rect x="315.6" y="324" width="6.4" height="3.8" rx="1.9" fill="#0064B2"/><rect x="315.6" y="330.4" width="6.4" height="3.8" rx="1.9" fill="#0064B2"/><rect x="318.3" y="338" width="9.5" height="1.9" fill="#0064B2"/><path d="M364.8 332H377.2M371 325.8V338.2" stroke="#0064B2" stroke-width="3.6" stroke-linecap="round" fill="none"/><path d="M400 326.2V323H406V326.2" fill="none" stroke="#0064B2" stroke-width="1.7"/><rect x="395" y="326.2" width="16" height="1.7" rx="0.6" fill="#0064B2"/><rect x="395" y="329.2" width="16" height="1.7" rx="0.6" fill="#0064B2"/><path d="M396.6 330.9H409.4L408.6 339.6Q408.4 341.8 406.2 341.8H399.8Q397.6 341.8 397.4 339.6Z" fill="#0064B2"/><path d="M400.2 333V340M403 333V340M405.8 333V340" stroke="#9DC0E2" stroke-width="1.5"/><path d="M435.00 321.20 L437.76 329.40 L446.41 329.49 L439.47 334.65 L442.05 342.91 L435.00 337.90 L427.95 342.91 L430.53 334.65 L423.59 329.49 L432.24 329.40Z" fill="#0064B2"/><path d="M451 330H460.2L455.6 336Z" fill="#0064B2"/><circle cx="482.2" cy="331" r="7.3" fill="none" stroke="#0064B2" stroke-width="2"/><path d="M487.4 336.2L492 340.8" stroke="#0064B2" stroke-width="2.2"/><rect x="506" y="324" width="17.8" height="16" rx="0.8" fill="none" stroke="#0064B2" stroke-width="2"/><rect x="505" y="323" width="19.8" height="3.6" rx="0.8" fill="#0064B2"/><rect x="509" y="329.2" width="3" height="1.5" fill="#0064B2"/><rect x="509" y="333.2" width="3" height="1.5" fill="#0064B2"/><circle cx="517.9" cy="332.4" r="3.6" fill="#0064B2"/><circle cx="517.7" cy="332.2" r="1.1" fill="#fff"/><path d="M519.8 334.6L521.8 336.8" stroke="#0064B2" stroke-width="1.8"/><path d="M539 325.1H553M539 329H550.8M539 335.1H553M539 339H553" stroke="#0064B2" stroke-width="1.7" fill="none"/><path d="M580 336H570V324H577L580 327V336" fill="none" stroke="#0064B2" stroke-width="2"/><path d="M577 323.5V327H580.5" fill="none" stroke="#0064B2" stroke-width="1.3"/><path d="M581.5 328H588V340H577.5" fill="none" stroke="#0064B2" stroke-width="2"/><path d="M576.5 330.6L583 336.4M576 334V330H580M583.6 332.6V337H579.4" stroke="#0064B2" stroke-width="1.6" fill="none"/><rect x="572.6" y="329.6" width="1.4" height="1.4" fill="#0064B2"/><rect x="584.6" y="335.4" width="1.4" height="1.4" fill="#0064B2"/><path d="M595 330H604.2L599.6 336Z" fill="#0064B2"/><path d="M621 328.2H629V334.3H641V340H621Z" fill="#0064B2"/><path d="M623 331.6H627V333.4H623ZM623 336.6H627V338.2H623ZM629.6 336.6H633.4V338.2H629.6ZM635.8 336.6H639.4V338.2H635.8Z" fill="#fff"/><path d="M631 322.8H640.2V331.7" fill="none" stroke="#0064B2" stroke-width="1.7"/><path d="M630.6 332L637 325.6M633.4 325.2H637.4V329.2" stroke="#0064B2" stroke-width="1.8" fill="none"/><path d="M1729 324H1738V325.7H1733.4V330.4H1738V332H1733.4V336.4H1739.2V338H1731.3V325.7H1729Z" fill="#0064B2"/><rect x="1736.6" y="324" width="6.4" height="3.8" rx="1.9" fill="#0064B2"/><rect x="1736.6" y="330.4" width="6.4" height="3.8" rx="1.9" fill="#0064B2"/><path d="M1739.3 338.9H1748.7M1744 334.2V343.7" stroke="#0064B2" stroke-width="2" fill="none"/><path d="M1753 330H1762.2L1757.6 336Z" fill="#0064B2"/><path d="M1777 324H1786V325.7H1781.4V330.4H1786V332H1781.4V336.4H1787.2V338H1779.3V325.7H1777Z" fill="#0064B2"/><rect x="1784.6" y="324" width="6.4" height="3.8" rx="1.9" fill="#0064B2"/><rect x="1784.6" y="330.4" width="6.4" height="3.8" rx="1.9" fill="#0064B2"/><rect x="1787.3" y="338" width="9.5" height="1.9" fill="#0064B2"/><circle cx="1816.9" cy="331.9" r="9.2" fill="#0064B2"/><path d="M1812.7 334L1816.9 329.8L1821.1000000000001 334" fill="none" stroke="#fff" stroke-width="1.6"/><circle cx="1849" cy="331.9" r="9.2" fill="#0064B2"/><path d="M1844.8 330.2L1849 334.4L1853.2 330.2" fill="none" stroke="#fff" stroke-width="1.6"/><circle cx="1880.9" cy="331.9" r="9.2" fill="#0064B2"/><path d="M1882.5 327.6L1878.3000000000002 331.9L1882.5 336.2" fill="none" stroke="#fff" stroke-width="1.6"/><circle cx="1912.9" cy="331.9" r="9.2" fill="#0064B2"/><path d="M1911.3000000000002 327.6L1915.5 331.9L1911.3000000000002 336.2" fill="none" stroke="#fff" stroke-width="1.6"/><rect x="1936" y="325" width="18.2" height="10.2" rx="0.8" fill="none" stroke="#0064B2" stroke-width="2"/><rect x="1943.6" y="336" width="3" height="2.4" fill="#0064B2"/><rect x="1941" y="338" width="8.2" height="1.8" fill="#0064B2"/><path d="M1961.1 330H1970.3L1965.6999999999998 336Z" fill="#0064B2"/><path d="M1988.8 324H2005.2V325.4L1999.2 331.6V340L1995.2 338.2V331.6L1988.8 325.4Z" fill="#0064B2"/><path d="M2013.1 330H2022.3L2017.6999999999998 336Z" fill="#0064B2"/></svg>
</body></html>
